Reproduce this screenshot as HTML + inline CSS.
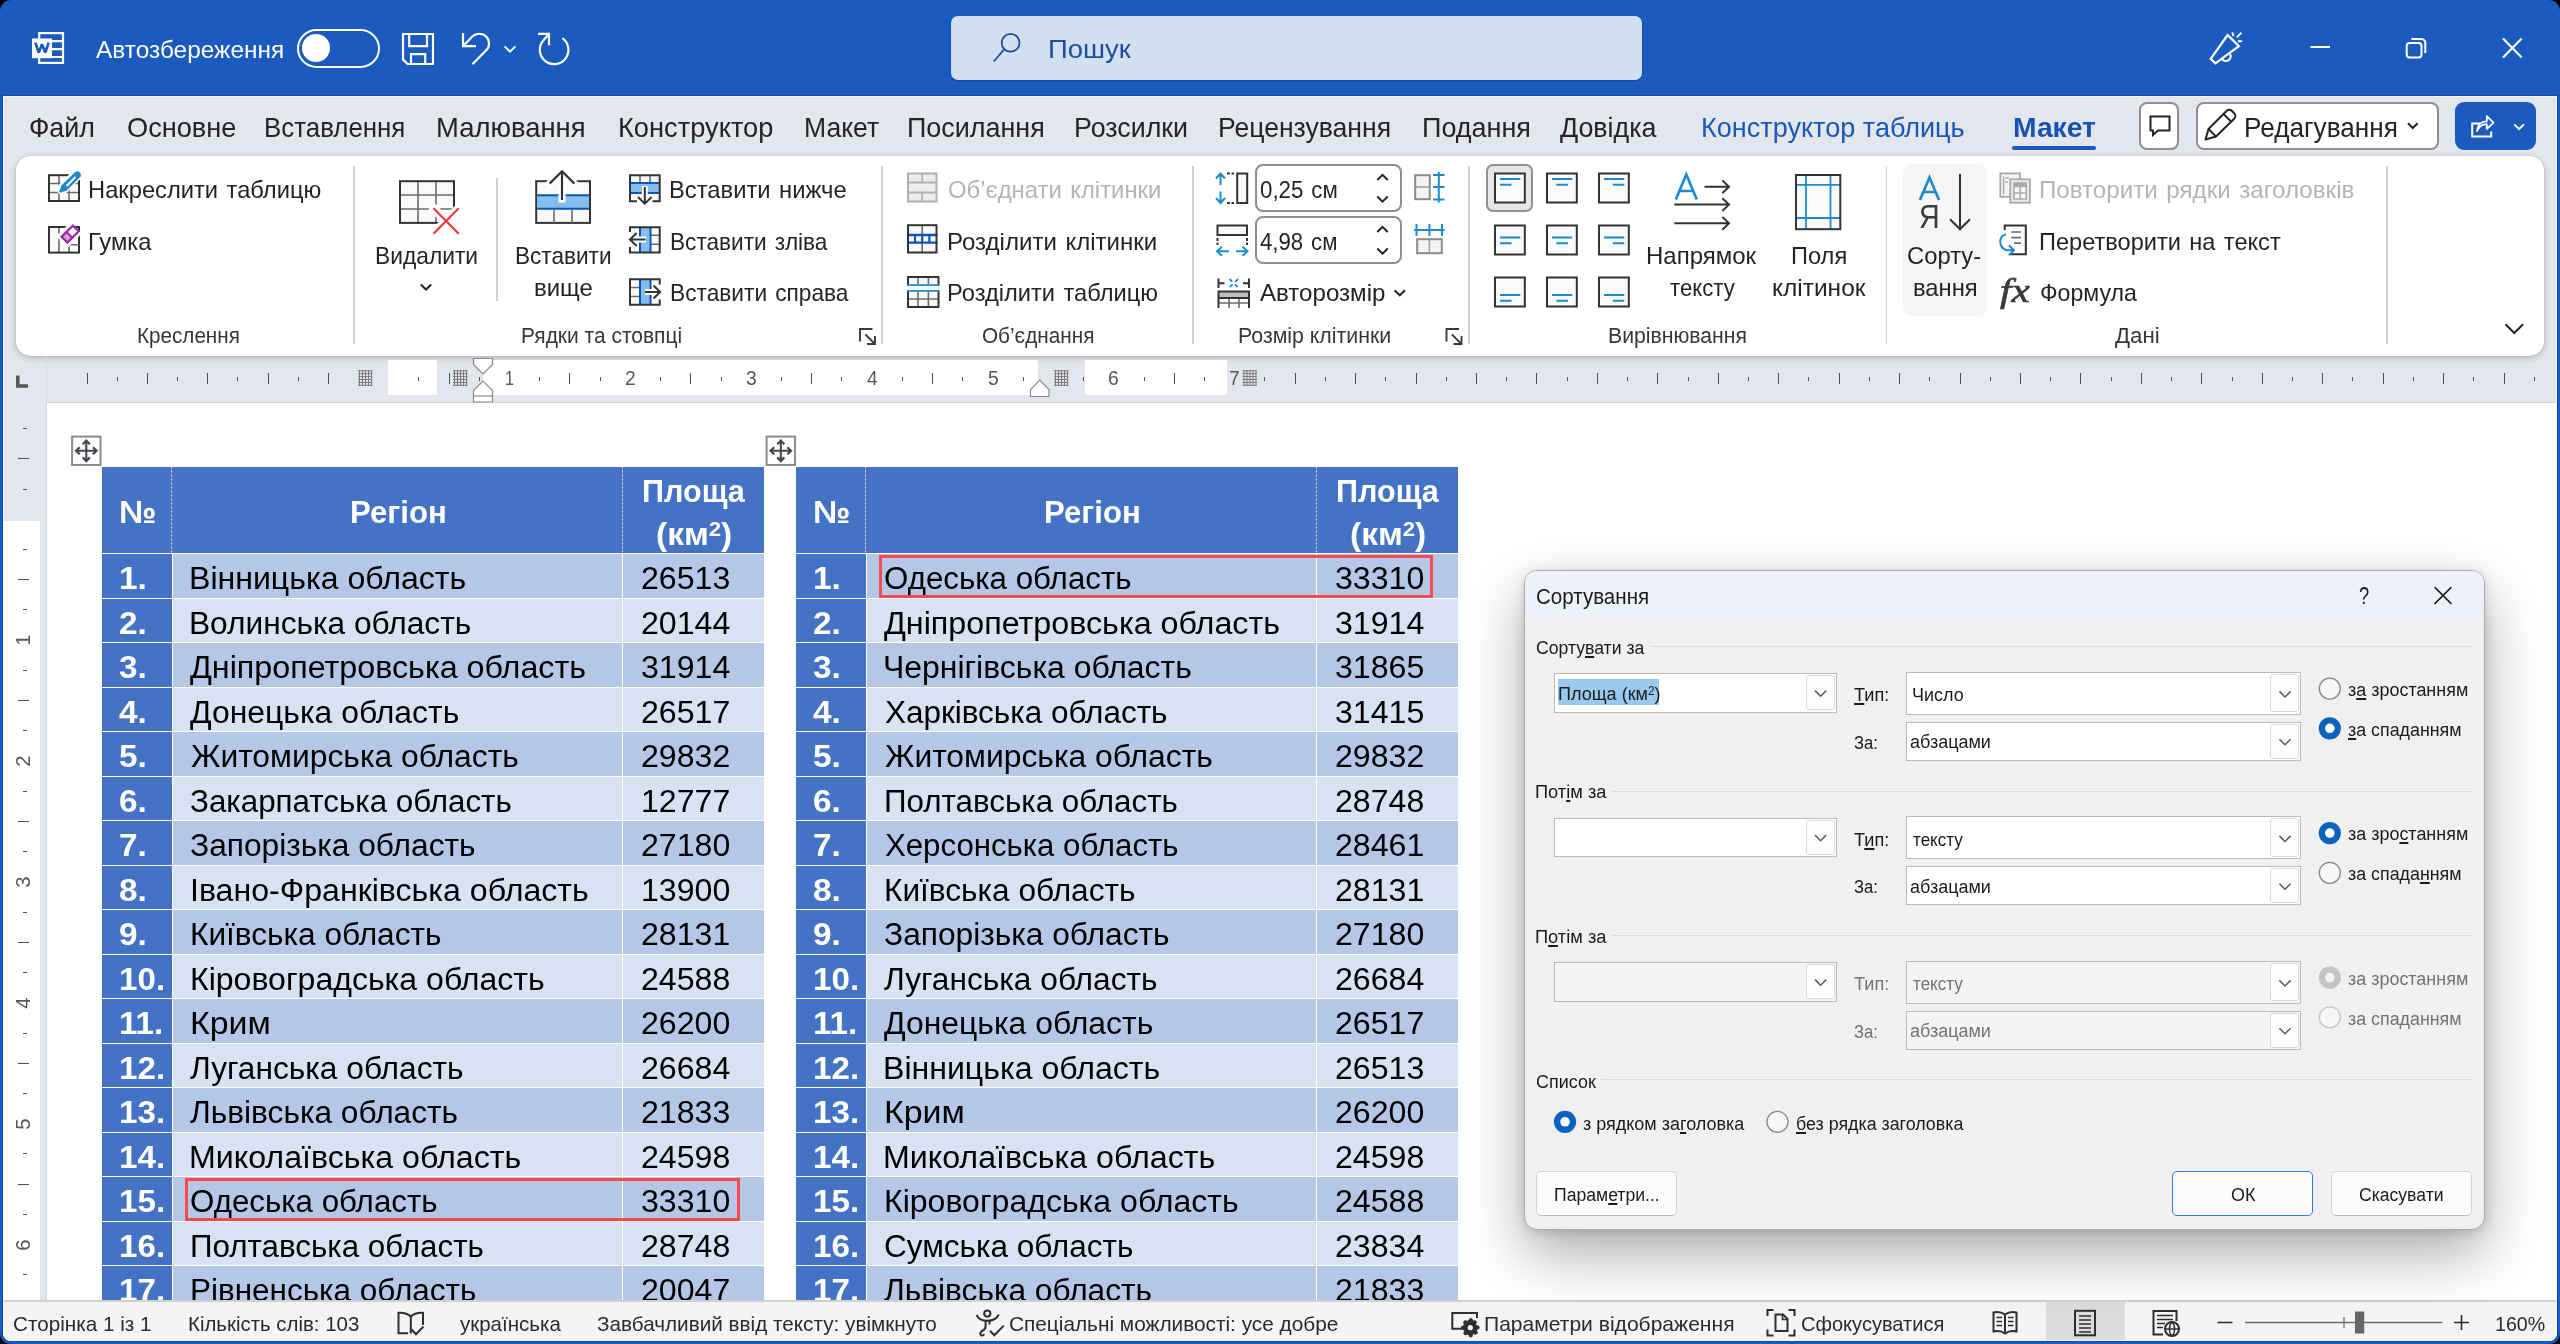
<!DOCTYPE html>
<html lang="uk"><head><meta charset="utf-8"><title>Word</title><style>
html,body{margin:0;padding:0;background:#000;}
body{width:2560px;height:1344px;position:relative;overflow:hidden;font-family:"Liberation Sans",sans-serif;}
.t{position:absolute;white-space:nowrap;transform-origin:0 0;}
u{text-decoration-thickness:1.5px;text-underline-offset:2px;}
#win{will-change:transform;position:absolute;left:0;top:0;width:2560px;height:1344px;background:#1B5ABF;border-radius:11px;overflow:hidden;}
</style></head><body>
<div id="win">
<div style="position:absolute;left:2px;top:95px;width:2555.5px;height:1247px;background:#0B4DBA;border-radius:0 0 9.5px 9.5px;"></div>
<div style="position:absolute;left:3px;top:96px;width:2553.5px;height:1244.8px;background:#E3E6EC;border-radius:0 0 8px 8px;"></div>
<!-- s1_title -->
<span class="t" style="left:96.45px;top:36.00px;font-size:24.5px;line-height:27px;color:#fff;transform:scaleX(0.9970);">Автозбереження</span>
<div style="position:absolute;left:296.5px;top:29px;width:83.5px;height:39px;box-sizing:border-box;border:2.5px solid #fff;border-radius:20px;"></div>
<div style="position:absolute;left:301.6px;top:33.5px;width:28.5px;height:28.5px;background:#fff;border-radius:50%;"></div>
<div style="position:absolute;left:951px;top:15.8px;width:690.5px;height:64.4px;background:#D2DFF1;border-radius:7px;box-shadow:0 1px 2px rgba(0,0,40,0.25);"></div>
<span class="t" style="left:1047.57px;top:34.70px;font-size:25.7px;line-height:28px;color:#1F4F9A;transform:scaleX(1.0697);">Пошук</span>
<svg style="position:absolute;left:0;top:0" width="2560" height="1344" viewBox="0 0 2560 1344" fill="none"><rect x="39.2" y="33.1" width="23.8" height="29.8" stroke="#fff" stroke-width="2.2" fill="none"/><path d="M51 41.2H63M51 49.2H63M51 57H63" stroke="#fff" stroke-width="2.2" fill="none"/><rect x="32" y="38.5" width="20" height="19.7" fill="#fff"/><path d="M35.4 42.6L38.7 52.6L42 44.2L45.3 52.6L48.6 42.6" stroke="#1B5ABF" stroke-width="2.7" fill="none" stroke-linejoin="bevel"/><path d="M403 34H433V64H407.5L403 59.5Z" stroke="#fff" stroke-width="2.2" fill="none"/><path d="M409.2 34V46.2H427V34M411 64V54.2H425.2V64" stroke="#fff" stroke-width="2.2" fill="none"/><path d="M463 33V46.2H476" stroke="#fff" stroke-width="2.2" fill="none"/><path d="M463.6 45.6L472.4 36.6A9.7 9.7 0 0 1 486.2 50.3L472.4 64.2" stroke="#fff" stroke-width="2.2" fill="none"/><path d="M504.6 46.4L510 51.6L515.4 46.4" stroke="#fff" stroke-width="2" fill="none"/><path d="M538 33.9H549V45.3" stroke="#fff" stroke-width="2.2" fill="none"/><path d="M548.4 34.6L543.5 40.3A14.3 14.3 0 1 0 562.4 38.2" stroke="#fff" stroke-width="2.2" fill="none"/><circle cx="1010.6" cy="42.8" r="8.9" stroke="#1F4F9A" stroke-width="1.8"/><path d="M1004.4 49.2L993.8 61.5" stroke="#1F4F9A" stroke-width="1.8"/><path d="M2310.5 47H2330" stroke="#fff" stroke-width="2"/><rect x="2406.7" y="43" width="14.8" height="14.5" rx="3" stroke="#fff" stroke-width="2"/><path d="M2411.5 39H2421.5A4 4 0 0 1 2425.3 43V53" stroke="#fff" stroke-width="2"/><path d="M2503 38.5L2521.7 57.5M2521.7 38.5L2503 57.5" stroke="#fff" stroke-width="2"/><path d="M2227.6 35L2238.9 46.2L2215.4 63.3L2210.7 58.8Z" stroke="#fff" stroke-width="2.2" fill="none" stroke-linejoin="miter"/><path d="M2221.8 58.6A4.6 4.6 0 0 0 2230 54" stroke="#fff" stroke-width="2.2" fill="none"/><path d="M2233.6 36.2L2232.2 32.4M2236.8 37.4L2241.4 32.6M2238 41.3H2242.2" stroke="#fff" stroke-width="2"/></svg>
<!-- s2_tabs -->
<span class="t" style="left:28.97px;top:112.20px;font-size:27.2px;line-height:31px;color:#242424;transform:scaleX(0.9849);">Файл</span>
<span class="t" style="left:127.22px;top:112.20px;font-size:27.2px;line-height:31px;color:#242424;transform:scaleX(0.9997);">Основне</span>
<span class="t" style="left:263.88px;top:112.20px;font-size:27.2px;line-height:31px;color:#242424;transform:scaleX(0.9515);">Вставлення</span>
<span class="t" style="left:435.75px;top:112.20px;font-size:27.2px;line-height:31px;color:#242424;transform:scaleX(1.0082);">Малювання</span>
<span class="t" style="left:618.46px;top:112.20px;font-size:27.2px;line-height:31px;color:#242424;transform:scaleX(1.0023);">Конструктор</span>
<span class="t" style="left:803.82px;top:112.20px;font-size:27.2px;line-height:31px;color:#242424;transform:scaleX(0.9760);">Макет</span>
<span class="t" style="left:906.82px;top:112.20px;font-size:27.2px;line-height:31px;color:#242424;transform:scaleX(0.9898);">Посилання</span>
<span class="t" style="left:1073.50px;top:112.20px;font-size:27.2px;line-height:31px;color:#242424;transform:scaleX(0.9865);">Розсилки</span>
<span class="t" style="left:1217.52px;top:112.20px;font-size:27.2px;line-height:31px;color:#242424;transform:scaleX(0.9763);">Рецензування</span>
<span class="t" style="left:1421.81px;top:112.20px;font-size:27.2px;line-height:31px;color:#242424;transform:scaleX(0.9926);">Подання</span>
<span class="t" style="left:1560.01px;top:112.20px;font-size:27.2px;line-height:31px;color:#242424;transform:scaleX(0.9859);">Довідка</span>
<span class="t" style="left:1701.28px;top:112.20px;font-size:27.2px;line-height:31px;color:#1957B8;transform:scaleX(0.9952);">Конструктор таблиць</span>
<span class="t" style="left:2012.83px;top:112.20px;font-size:27.2px;line-height:31px;color:#1651B4;transform:scaleX(1.0391);font-weight:700;">Макет</span>
<div style="position:absolute;left:2012px;top:145.8px;width:84px;height:4.2px;background:#185ABD;border-radius:2px;"></div>
<div style="position:absolute;left:2139.3px;top:101.5px;width:40.2px;height:48px;box-sizing:border-box;background:#fff;border:2px solid #8f8f8f;border-radius:8px;"></div>
<div style="position:absolute;left:2196px;top:101.5px;width:242.8px;height:48px;box-sizing:border-box;background:#fff;border:2px solid #8f8f8f;border-radius:8px;"></div>
<span class="t" style="left:2244.35px;top:112.20px;font-size:27.2px;line-height:31px;color:#242424;transform:scaleX(0.9619);">Редагування</span>
<div style="position:absolute;left:2455px;top:102px;width:80.8px;height:48px;background:#1B5ABF;border-radius:9px;"></div>
<svg style="position:absolute;left:0;top:0" width="2560" height="1344" viewBox="0 0 2560 1344" fill="none"><path d="M2150.5 116.5H2169.5V130.5H2158L2153 135V130.5H2150.5Z" stroke="#242424" stroke-width="2" fill="none" stroke-linejoin="miter"/><path d="M2205.5 139.5L2208.5 129L2226.5 111A3.9 3.9 0 0 1 2232 111L2234.2 113.2A3.9 3.9 0 0 1 2234.2 118.7L2216 136.5Z" stroke="#242424" stroke-width="2" fill="none" stroke-linejoin="round"/><path d="M2223.5 114L2231 121.5M2208.5 129L2216 136.5" stroke="#242424" stroke-width="2" fill="none"/><path d="M2408 123.2L2412.8 128L2417.6 123.2" stroke="#242424" stroke-width="2" fill="none"/><path d="M2480 123.5H2472.2V136.5H2491.2V131.5" stroke="#fff" stroke-width="2" fill="none"/><path d="M2477 131C2477.5 124.5 2481.5 121.3 2486.8 121.3V116.2L2493.5 122.6L2486.8 129V124.2C2482.5 124.2 2479.5 126 2477 131Z" stroke="#fff" stroke-width="1.8" fill="none" stroke-linejoin="round"/><path d="M2514.3 124.4L2519.1 129.2L2523.9 124.4" stroke="#fff" stroke-width="2" fill="none"/></svg>
<!-- s3_ribbon -->
<div style="position:absolute;left:16px;top:155.5px;width:2528px;height:200px;background:#fff;border-radius:15px;box-shadow:0 2px 7px rgba(0,0,0,0.22),0 0 2px rgba(0,0,0,0.10);"></div>
<div style="position:absolute;left:353.0px;top:166px;width:1.6px;height:178px;background:#d1d1d1;"></div>
<div style="position:absolute;left:496.2px;top:178px;width:1.6px;height:123px;background:#d1d1d1;"></div>
<div style="position:absolute;left:881.2px;top:166px;width:1.6px;height:178px;background:#d1d1d1;"></div>
<div style="position:absolute;left:1192.2px;top:166px;width:1.6px;height:178px;background:#d1d1d1;"></div>
<div style="position:absolute;left:1468.0px;top:166px;width:1.6px;height:178px;background:#d1d1d1;"></div>
<div style="position:absolute;left:1885.5px;top:166px;width:1.6px;height:178px;background:#d1d1d1;"></div>
<div style="position:absolute;left:2386.2px;top:166px;width:1.6px;height:178px;background:#d1d1d1;"></div>
<span class="t" style="left:88.35px;top:176.50px;font-size:23.2px;line-height:26px;color:#242424;transform:scaleX(1.0227);word-spacing:1.8px;">Накреслити таблицю</span>
<span class="t" style="left:88.35px;top:228.50px;font-size:23.2px;line-height:26px;color:#242424;transform:scaleX(1.0255);word-spacing:1.8px;">Гумка</span>
<span class="t" style="left:137.31px;top:324.20px;font-size:21.4px;line-height:24px;color:#363636;transform:scaleX(0.9655);">Креслення</span>
<span class="t" style="left:375.33px;top:243.00px;font-size:23.2px;line-height:26px;color:#242424;transform:scaleX(0.9827);word-spacing:1.8px;">Видалити</span>
<span class="t" style="left:514.85px;top:243.00px;font-size:23.2px;line-height:26px;color:#242424;transform:scaleX(0.9736);word-spacing:1.8px;">Вставити</span>
<span class="t" style="left:533.55px;top:274.60px;font-size:23.2px;line-height:26px;color:#242424;transform:scaleX(1.0335);word-spacing:1.8px;">вище</span>
<span class="t" style="left:668.55px;top:176.50px;font-size:23.2px;line-height:26px;color:#242424;transform:scaleX(1.0243);word-spacing:1.8px;">Вставити нижче</span>
<span class="t" style="left:669.84px;top:228.50px;font-size:23.2px;line-height:26px;color:#242424;transform:scaleX(0.9755);word-spacing:1.8px;">Вставити зліва</span>
<span class="t" style="left:669.84px;top:280.20px;font-size:23.2px;line-height:26px;color:#242424;transform:scaleX(0.9789);word-spacing:1.8px;">Вставити справа</span>
<span class="t" style="left:521.28px;top:324.20px;font-size:21.4px;line-height:24px;color:#363636;transform:scaleX(0.9799);">Рядки та стовпці</span>
<span class="t" style="left:947.58px;top:176.50px;font-size:23.2px;line-height:26px;color:#b4b4b4;transform:scaleX(1.0287);word-spacing:1.8px;">Об’єднати клітинки</span>
<span class="t" style="left:946.73px;top:228.50px;font-size:23.2px;line-height:26px;color:#242424;transform:scaleX(1.0369);word-spacing:1.8px;">Розділити клітинки</span>
<span class="t" style="left:946.76px;top:280.20px;font-size:23.2px;line-height:26px;color:#242424;transform:scaleX(1.0202);word-spacing:1.8px;">Розділити таблицю</span>
<span class="t" style="left:981.53px;top:324.20px;font-size:21.4px;line-height:24px;color:#363636;transform:scaleX(0.9689);">Об’єднання</span>
<div style="position:absolute;left:1254.5px;top:164px;width:147.3px;height:47.5px;box-sizing:border-box;background:#fff;border:2px solid #8f8f8f;border-radius:8px;"></div>
<div style="position:absolute;left:1254.5px;top:216px;width:147.3px;height:47.5px;box-sizing:border-box;background:#fff;border:2px solid #8f8f8f;border-radius:8px;"></div>
<span class="t" style="left:1259.83px;top:176.50px;font-size:23.2px;line-height:26px;color:#242424;transform:scaleX(0.9624);word-spacing:1.8px;">0,25 см</span>
<span class="t" style="left:1260.21px;top:228.50px;font-size:23.2px;line-height:26px;color:#242424;transform:scaleX(0.9575);word-spacing:1.8px;">4,98 см</span>
<span class="t" style="left:1259.95px;top:280.20px;font-size:23.2px;line-height:26px;color:#242424;transform:scaleX(1.0390);word-spacing:1.8px;">Авторозмір</span>
<span class="t" style="left:1238.25px;top:324.20px;font-size:21.4px;line-height:24px;color:#363636;transform:scaleX(0.9958);">Розмір клітинки</span>
<div style="position:absolute;left:1486px;top:164px;width:47px;height:47.5px;box-sizing:border-box;background:#e6e6e6;border:2px solid #8f8f8f;border-radius:7px;"></div>
<span class="t" style="left:1646.23px;top:243.00px;font-size:23.2px;line-height:26px;color:#242424;transform:scaleX(1.0339);word-spacing:1.8px;">Напрямок</span>
<span class="t" style="left:1669.62px;top:274.60px;font-size:23.2px;line-height:26px;color:#242424;transform:scaleX(0.9565);word-spacing:1.8px;">тексту</span>
<span class="t" style="left:1791.08px;top:243.00px;font-size:23.2px;line-height:26px;color:#242424;transform:scaleX(1.0195);word-spacing:1.8px;">Поля</span>
<span class="t" style="left:1771.56px;top:274.60px;font-size:23.2px;line-height:26px;color:#242424;transform:scaleX(1.0561);word-spacing:1.8px;">клітинок</span>
<span class="t" style="left:1608.26px;top:324.20px;font-size:21.4px;line-height:24px;color:#363636;transform:scaleX(0.9901);">Вирівнювання</span>
<div style="position:absolute;left:1903px;top:164px;width:84px;height:151.5px;background:#f5f5f5;border-radius:9px;"></div>
<span class="t" style="left:1907.01px;top:243.00px;font-size:23.2px;line-height:26px;color:#242424;transform:scaleX(1.0273);word-spacing:1.8px;">Сорту-</span>
<span class="t" style="left:1912.56px;top:274.60px;font-size:23.2px;line-height:26px;color:#242424;transform:scaleX(1.0255);word-spacing:1.8px;">вання</span>
<span class="t" style="left:2039.24px;top:176.50px;font-size:23.2px;line-height:26px;color:#b4b4b4;transform:scaleX(1.0413);word-spacing:1.8px;">Повторити рядки заголовків</span>
<span class="t" style="left:2039.29px;top:228.50px;font-size:23.2px;line-height:26px;color:#242424;transform:scaleX(1.0171);word-spacing:1.8px;">Перетворити на текст</span>
<span class="t" style="left:2039.88px;top:280.20px;font-size:23.2px;line-height:26px;color:#242424;transform:scaleX(0.9981);word-spacing:1.8px;">Формула</span>
<span class="t" style="left:2114.84px;top:324.20px;font-size:21.4px;line-height:24px;color:#363636;transform:scaleX(1.0390);">Дані</span>
<span class="t" style="left:1919.29px;top:198.00px;font-size:33px;line-height:37px;color:#3a3a3a;transform:scaleX(0.8658);">Я</span>
<span class="t" style="left:2000.05px;top:270.50px;font-size:34.5px;line-height:38px;color:#3a3a3a;transform:scaleX(1.1940);font-style:italic;font-family:'Liberation Serif',serif;-webkit-text-stroke:0.7px #3a3a3a;">fx</span>
<svg style="position:absolute;left:0;top:0" width="2560" height="1344" viewBox="0 0 2560 1344" fill="none"><rect x="49" y="175.2" width="30" height="25.80000000000001" fill="#fafafa"/><path d="M59 175.2V201M69 175.2V201M49 183.5H79M49 192.5H79" stroke="#6b6b6b" stroke-width="1.6"/><rect x="49" y="175.2" width="30" height="25.80000000000001" stroke="#333" stroke-width="2"/><path d="M80 171.5L58.5 193" stroke="#fff" stroke-width="11" stroke-linecap="butt"/><path d="M76.3 172.6A2.6 2.6 0 0 1 79.6 176L66 189.6L60.6 191.4L62.4 186Z" fill="#1E8BCD" stroke="#1E8BCD" stroke-width="2.4" stroke-linejoin="round"/><path d="M75.5 177L66.5 186" stroke="#fff" stroke-width="1.8"/><rect x="49" y="227" width="30" height="25.599999999999994" fill="#fafafa"/><path d="M59 227V252.6M69 227V252.6" stroke="#6b6b6b" stroke-width="1.6"/><rect x="49" y="227" width="30" height="25.599999999999994" stroke="#333" stroke-width="2"/><path d="M69 244.8H79" stroke="#6b6b6b" stroke-width="1.6"/><path d="M76 228L62 242" stroke="#fff" stroke-width="16"/><path d="M72.9 225.6L78.6 231.3L67.4 242.5L61.7 236.8Z" fill="#fff" stroke="#9C2BAB" stroke-width="2.2"/><path d="M66.6 232L72.2 237.7L67.4 242.5L61.7 236.8Z" fill="#D6A1DD" stroke="#9C2BAB" stroke-width="2.2"/><path d="M420.8 284.5L426 289.5L431.2 284.5" stroke="#242424" stroke-width="2" fill="none"/><path d="M860 341.5V329H872.5" stroke="#3a3a3a" stroke-width="1.9" fill="none"/><path d="M865.3 334.3L875 344M875 336V344H867" stroke="#3a3a3a" stroke-width="1.9" fill="none"/><rect x="400" y="181.2" width="54" height="41.70000000000002" fill="#fafafa"/><path d="M418 181.2V222.9M436 181.2V222.9M400 195H454M400 209H454" stroke="#6b6b6b" stroke-width="1.6"/><rect x="400" y="181.2" width="54" height="41.70000000000002" stroke="#333" stroke-width="2"/><path d="M431.5 206.3L460.7 235.7M460.7 206.3L431.5 235.7" stroke="#fff" stroke-width="9"/><path d="M446.1 221L460.5 206.6V235.4ZM446.1 221L431.7 235.4H460.5Z" fill="#fff"/><path d="M433.5 208.3L458.7 233.7M458.7 208.3L433.5 233.7" stroke="#F03A3E" stroke-width="2.2"/><rect x="536.2" y="181.2" width="53.799999999999955" height="41.70000000000002" fill="#fafafa" stroke="#333" stroke-width="2"/><path d="M554 210V223M572 210V223" stroke="#6b6b6b" stroke-width="1.6"/><rect x="537.2" y="195.2" width="51.8" height="13.6" fill="#83BEEC"/><path d="M537.2 195.2H589M537.2 208.8H589" stroke="#0F54B8" stroke-width="2"/><path d="M562 170V199M549 184L562 171L575 184" stroke="#fff" stroke-width="7" stroke-linecap="square"/><path d="M549 184L562 171L575 184Z" fill="#fdfdfd"/><path d="M562 171.5V200M549.6 183.6L562 171.2L574.4 183.6" stroke="#333" stroke-width="2.2"/><rect x="630" y="175.2" width="29.7" height="26" fill="#fafafa"/><path d="M640 175.2V183M650 175.2V183" stroke="#6b6b6b" stroke-width="1.6"/><rect x="630" y="183" width="29.7" height="10" fill="#83BEEC"/><path d="M630 183H659.7M630 193H659.7" stroke="#0F54B8" stroke-width="2"/><path d="M637 201.2H630V175.2H659.7V201.2H652.5" stroke="#333" stroke-width="2"/><path d="M644.8 186V203" stroke="#fff" stroke-width="6"/><path d="M644.8 187V203M638 197L644.8 203.6L651.6 197" stroke="#333" stroke-width="2"/><rect x="630" y="227.2" width="29.7" height="25.2" fill="#fafafa"/><path d="M651 235.3H659.7M651 244.3H659.7" stroke="#6b6b6b" stroke-width="1.6"/><rect x="640" y="227.2" width="10.5" height="25.2" fill="#83BEEC"/><path d="M640 227.2V252.4M650.5 227.2V252.4" stroke="#0F54B8" stroke-width="2"/><path d="M630 232V227.2H659.7V252.4H630V247" stroke="#333" stroke-width="2"/><path d="M630 239.5H646" stroke="#fff" stroke-width="6"/><path d="M630.5 239.5H645.5M636.6 233L630 239.5L636.6 246" stroke="#333" stroke-width="2"/><rect x="630" y="279.2" width="29.7" height="25.6" fill="#fafafa"/><path d="M630 287.5H640M630 296.5H640" stroke="#6b6b6b" stroke-width="1.6"/><rect x="640" y="279.2" width="10.5" height="25.6" fill="#83BEEC"/><path d="M640 279.2V304.8M650.5 279.2V304.8" stroke="#0F54B8" stroke-width="2"/><path d="M659.7 284.5V279.2H630V304.8H659.7V299.5" stroke="#333" stroke-width="2"/><path d="M645 292H660" stroke="#fff" stroke-width="6"/><path d="M645 292H660M653.6 285.5L660.2 292L653.6 298.5" stroke="#333" stroke-width="2"/><rect x="908" y="173.5" width="28.5" height="28" fill="#ededed" stroke="#b0b0b0" stroke-width="2"/><path d="M908 182.5H936.5M908 192.5H936.5M922.2 173.5V182.5M922.2 192.5V201.5" stroke="#b0b0b0" stroke-width="1.8"/><rect x="908" y="225.2" width="28.5" height="27.3" fill="#fafafa"/><path d="M922.2 225.2V234M922.2 243V252.5" stroke="#6b6b6b" stroke-width="1.6"/><path d="M907 235H937.5M907 242.6H937.5" stroke="#0F54B8" stroke-width="2.4"/><path d="M915 235V242.6M922.2 235V242.6M929.4 235V242.6" stroke="#0F54B8" stroke-width="2.2"/><rect x="908" y="225.2" width="28.5" height="27.3" stroke="#333" stroke-width="2"/><rect x="908" y="277" width="30.5" height="30" fill="#fafafa"/><path d="M918 277V284M928.4 277V284M918 291.5V307M928.4 291.5V307M908 299H938.5" stroke="#6b6b6b" stroke-width="1.6"/><path d="M908 285V277H938.5V285M908 291V307H938.5V291" stroke="#333" stroke-width="2"/><path d="M907 285.2H939.5M907 290.8H939.5" stroke="#1E8BCD" stroke-width="1.8"/><path d="M1377.3 180L1382.5 174.8L1387.7 180M1377.3 196.5L1382.5 201.7L1387.7 196.5M1377.3 232L1382.5 226.8L1387.7 232M1377.3 248.5L1382.5 253.7L1387.7 248.5" stroke="#242424" stroke-width="2" fill="none"/><path d="M1394.6 290.3L1399.8 295.3L1405.0 290.3" stroke="#242424" stroke-width="2" fill="none"/><path d="M1446.5 341.5V329H1459.0" stroke="#3a3a3a" stroke-width="1.9" fill="none"/><path d="M1451.8 334.3L1461.5 344M1461.5 336V344H1453.5" stroke="#3a3a3a" stroke-width="1.9" fill="none"/><rect x="1237.2" y="173.5" width="10" height="29.5" fill="#fafafa" stroke="#333" stroke-width="2"/><path d="M1227 173.5H1234M1227 203H1234" stroke="#333" stroke-width="2" stroke-dasharray="3 1.5"/><path d="M1220.5 174V185M1220.5 191.5V202.5M1216 178.5L1220.5 173.5L1225 178.5M1216 198L1220.5 203L1225 198" stroke="#1E8BCD" stroke-width="2" fill="none"/><rect x="1217.5" y="225.5" width="29.5" height="9.5" fill="#fafafa" stroke="#333" stroke-width="2"/><path d="M1217.5 238V245M1247 238V245" stroke="#333" stroke-width="2" stroke-dasharray="3 1.5"/><path d="M1217 251.3H1229M1236 251.3H1247.5M1222 246.8L1217 251.3L1222 255.8M1242.5 246.8L1247.5 251.3L1242.5 255.8" stroke="#1E8BCD" stroke-width="2" fill="none"/><rect x="1415.2" y="175.2" width="14.6" height="24" fill="#f4f4f4" stroke="#8a8a8a" stroke-width="2"/><path d="M1415.2 187H1429.8" stroke="#a0a0a0" stroke-width="1.6"/><path d="M1438.8 172V202.5M1433 175H1444.5M1433 187H1444.5M1433 199.4H1444.5" stroke="#1E8BCD" stroke-width="2"/><rect x="1417.2" y="239.2" width="24.6" height="14" fill="#f4f4f4" stroke="#8a8a8a" stroke-width="2"/><path d="M1429.4 239.2V253.2" stroke="#a0a0a0" stroke-width="1.6"/><path d="M1414 230H1444.5M1416.5 224V236M1429.4 224V236M1442 224V236" stroke="#1E8BCD" stroke-width="2"/><path d="M1218.5 278.5V288M1218.5 283.2H1224.5M1249 278.5V288M1249 283.2H1243" stroke="#333" stroke-width="2"/><path d="M1229.5 279L1238 287.5M1238 279L1229.5 287.5" stroke="#1E8BCD" stroke-width="1.8" stroke-dasharray="4 3.6"/><rect x="1218.5" y="291.5" width="30.5" height="6.5" fill="#bdbdbd"/><path d="M1229 298V308M1239 298V308M1218.5 303H1249" stroke="#6b6b6b" stroke-width="1.6"/><path d="M1218.5 308V291.5H1249V308M1218.5 298H1249" stroke="#333" stroke-width="2" fill="none"/><rect x="1495" y="173.5" width="29.8" height="29" fill="#fafafa" stroke="#333" stroke-width="2"/><path d="M1500 179.0H1520.3M1500 184.8H1511.5" stroke="#1E8BCD" stroke-width="2"/><rect x="1547" y="173.5" width="29.8" height="29" fill="#fafafa" stroke="#333" stroke-width="2"/><path d="M1552 179.0H1572.3M1556.4 184.8H1567.9" stroke="#1E8BCD" stroke-width="2"/><rect x="1599" y="173.5" width="29.8" height="29" fill="#fafafa" stroke="#333" stroke-width="2"/><path d="M1604 179.0H1624.3M1612.8 184.8H1624.3" stroke="#1E8BCD" stroke-width="2"/><rect x="1495" y="225.5" width="29.8" height="29" fill="#fafafa" stroke="#333" stroke-width="2"/><path d="M1500 237.5H1520.3M1500 243.3H1511.5" stroke="#1E8BCD" stroke-width="2"/><rect x="1547" y="225.5" width="29.8" height="29" fill="#fafafa" stroke="#333" stroke-width="2"/><path d="M1552 237.5H1572.3M1556.4 243.3H1567.9" stroke="#1E8BCD" stroke-width="2"/><rect x="1599" y="225.5" width="29.8" height="29" fill="#fafafa" stroke="#333" stroke-width="2"/><path d="M1604 237.5H1624.3M1612.8 243.3H1624.3" stroke="#1E8BCD" stroke-width="2"/><rect x="1495" y="277.5" width="29.8" height="29" fill="#fafafa" stroke="#333" stroke-width="2"/><path d="M1500 295.0H1520.3M1500 300.8H1511.5" stroke="#1E8BCD" stroke-width="2"/><rect x="1547" y="277.5" width="29.8" height="29" fill="#fafafa" stroke="#333" stroke-width="2"/><path d="M1552 295.0H1572.3M1556.4 300.8H1567.9" stroke="#1E8BCD" stroke-width="2"/><rect x="1599" y="277.5" width="29.8" height="29" fill="#fafafa" stroke="#333" stroke-width="2"/><path d="M1604 295.0H1624.3M1612.8 300.8H1624.3" stroke="#1E8BCD" stroke-width="2"/><path d="M1675.8 199.5L1686.3 174.5L1696.8 199.5M1679.6 191H1693" stroke="#1E8BCD" stroke-width="2.7" fill="none"/><path d="M1704.5 186.8H1729M1722.3 180.4L1729 186.8L1722.3 193.20000000000002" stroke="#333" stroke-width="2" fill="none"/><path d="M1674.3 204.6H1729M1722.3 198.2L1729 204.6L1722.3 211.0" stroke="#333" stroke-width="2" fill="none"/><path d="M1674.3 223.3H1729M1722.3 216.9L1729 223.3L1722.3 229.70000000000002" stroke="#333" stroke-width="2" fill="none"/><rect x="1796" y="175" width="44.3" height="54.2" fill="#fafafa"/><path d="M1806 175V229.2M1830.5 175V229.2M1796 184.8H1840.3M1796 218H1840.3" stroke="#1E8BCD" stroke-width="1.8"/><rect x="1796" y="175" width="44.3" height="54.2" stroke="#333" stroke-width="2"/><path d="M1920 200L1929.5 177.5L1939 200M1923.3 192H1935.7" stroke="#1E8BCD" stroke-width="2.7" fill="none"/><path d="M1960 174V229M1950 219.3L1960 229.3L1970 219.3" stroke="#333" stroke-width="2" fill="none"/><rect x="2000.3" y="173.4" width="19.6" height="23.4" fill="#f3f3f3" stroke="#a9a9a9" stroke-width="1.8"/><path d="M2003.6 176.5V194" stroke="#a9a9a9" stroke-width="1.4"/><path d="M2005.5 178H2009M2005.5 182H2008" stroke="#a9a9a9" stroke-width="1.4"/><rect x="2010.3" y="179.3" width="19.6" height="23.4" fill="#e9e9e9" stroke="#a9a9a9" stroke-width="1.8"/><rect x="2014" y="183" width="12.3" height="16" fill="#f6f6f6" stroke="#a9a9a9" stroke-width="1.5"/><rect x="2014" y="183" width="12.3" height="4.2" fill="#a9a9a9"/><path d="M2014 193H2026.3M2020.2 187V199" stroke="#a9a9a9" stroke-width="1.5"/><path d="M2004.8 230V225.5H2025.8V254.3H2010.5" stroke="#333" stroke-width="2" fill="none"/><path d="M2011.3 232H2021M2011.3 237.6H2021M2014 243.2H2021" stroke="#6b6b6b" stroke-width="1.7"/><path d="M2006 234.2C1998.5 236 1998 247.5 2006.5 250.2H2013.5M2008.8 245.2L2014 250.2L2008.8 255.2" stroke="#1E8BCD" stroke-width="2" fill="none"/><path d="M2505.5 324.3L2514.3 333L2523.1 324.3" stroke="#242424" stroke-width="2" fill="none"/></svg>
<!-- s4_ruler -->
<div style="position:absolute;left:388px;top:360px;width:49px;height:35px;background:#fff;"></div>
<div style="position:absolute;left:483px;top:360px;width:555px;height:35px;background:#fff;"></div>
<div style="position:absolute;left:1085px;top:360px;width:142px;height:35px;background:#fff;"></div>
<div style="position:absolute;left:46px;top:401.5px;width:2510.5px;height:1.5px;background:#d2d4d8;"></div>
<div style="position:absolute;left:46.5px;top:403px;width:2510px;height:897px;background:#fff;"></div>
<div style="position:absolute;left:45.5px;top:356px;width:1.2px;height:944px;background:#d6d8dc;"></div>
<div style="position:absolute;left:3px;top:521px;width:37px;height:779px;background:#fff;"></div>
<span class="t" style="left:504.74px;top:367.00px;font-size:20.3px;line-height:22px;color:#575757;transform:scaleX(0.8000);">1</span>
<span class="t" style="left:625.00px;top:367.00px;font-size:20.3px;line-height:22px;color:#575757;transform:scaleX(0.9500);">2</span>
<span class="t" style="left:745.93px;top:367.00px;font-size:20.3px;line-height:22px;color:#575757;transform:scaleX(0.9500);">3</span>
<span class="t" style="left:866.83px;top:367.00px;font-size:20.3px;line-height:22px;color:#575757;transform:scaleX(0.9500);">4</span>
<span class="t" style="left:987.65px;top:367.00px;font-size:20.3px;line-height:22px;color:#575757;transform:scaleX(0.9500);">5</span>
<span class="t" style="left:1108.45px;top:367.00px;font-size:20.3px;line-height:22px;color:#575757;transform:scaleX(0.9500);">6</span>
<span class="t" style="left:1229.39px;top:367.00px;font-size:20.3px;line-height:22px;color:#575757;transform:scaleX(0.9500);">7</span>
<span class="t" style="left:12.2px;top:646.2px;font-size:20.3px;line-height:22px;color:#575757;transform:rotate(-90deg);transform-origin:0 0;width:12px;text-align:center;">1</span>
<span class="t" style="left:12.2px;top:767.1px;font-size:20.3px;line-height:22px;color:#575757;transform:rotate(-90deg);transform-origin:0 0;width:12px;text-align:center;">2</span>
<span class="t" style="left:12.2px;top:887.9px;font-size:20.3px;line-height:22px;color:#575757;transform:rotate(-90deg);transform-origin:0 0;width:12px;text-align:center;">3</span>
<span class="t" style="left:12.2px;top:1008.8px;font-size:20.3px;line-height:22px;color:#575757;transform:rotate(-90deg);transform-origin:0 0;width:12px;text-align:center;">4</span>
<span class="t" style="left:12.2px;top:1129.7px;font-size:20.3px;line-height:22px;color:#575757;transform:rotate(-90deg);transform-origin:0 0;width:12px;text-align:center;">5</span>
<span class="t" style="left:12.2px;top:1250.6px;font-size:20.3px;line-height:22px;color:#575757;transform:rotate(-90deg);transform-origin:0 0;width:12px;text-align:center;">6</span>
<svg style="position:absolute;left:0;top:0" width="2560" height="1344" viewBox="0 0 2560 1344" fill="none"><path d="M17.8 375.5V386H28" stroke="#555" stroke-width="3.6" fill="none"/><path d="M87.5 373V384M117.5 377V381M147.5 373V384M177.5 377V381M207.5 373V384M237.5 377V381M268.5 373V384M298.5 377V381M328.5 373V384M418.5 377V381M449.5 373V384M479.5 377V381M539.5 377V381M569.5 373V384M600.5 377V381M660.5 377V381M690.5 373V384M721.5 377V381M781.5 377V381M811.5 373V384M841.5 377V381M902.5 377V381M932.5 373V384M962.5 377V381M1023.5 377V381M1083.5 377V381M1144.5 377V381M1174.5 373V384M1204.5 377V381M1264.5 377V381M1295.5 373V384M1325.5 377V381M1355.5 373V384M1385.5 377V381M1416.5 373V384M1446.5 377V381M1476.5 373V384M1506.5 377V381M1536.5 373V384M1567.5 377V381M1597.5 373V384M1627.5 377V381M1657.5 373V384M1688.5 377V381M1718.5 373V384M1748.5 377V381M1778.5 373V384M1808.5 377V381M1839.5 373V384M1869.5 377V381M1899.5 373V384M1929.5 377V381M1960.5 373V384M1990.5 377V381M2020.5 373V384M2050.5 377V381M2080.5 373V384M2111.5 377V381M2141.5 373V384M2171.5 377V381M2201.5 373V384M2232.5 377V381M2262.5 373V384M2292.5 377V381M2322.5 373V384M2352.5 377V381M2383.5 373V384M2413.5 377V381M2443.5 373V384M2473.5 377V381M2504.5 373V384M2534.5 377V381" stroke="#505050" stroke-width="1" shape-rendering="crispEdges"/><path d="M359.5 370V386M362.5 370V386M365.5 370V386M368.5 370V386M371.5 370V386M358 370.8H372.5M358 373.7H372.5M358 376.6H372.5M358 379.5H372.5M358 382.40000000000003H372.5M358 385.3H372.5" stroke="#7a7a7a" stroke-width="1"/><path d="M454.5 370V386M457.5 370V386M460.5 370V386M463.5 370V386M466.5 370V386M453 370.8H467.5M453 373.7H467.5M453 376.6H467.5M453 379.5H467.5M453 382.40000000000003H467.5M453 385.3H467.5" stroke="#7a7a7a" stroke-width="1"/><path d="M1055.5 370V386M1058.5 370V386M1061.5 370V386M1064.5 370V386M1067.5 370V386M1054 370.8H1068.5M1054 373.7H1068.5M1054 376.6H1068.5M1054 379.5H1068.5M1054 382.40000000000003H1068.5M1054 385.3H1068.5" stroke="#7a7a7a" stroke-width="1"/><path d="M1244.0 370V386M1247.0 370V386M1250.0 370V386M1253.0 370V386M1256.0 370V386M1242.5 370.8H1257.0M1242.5 373.7H1257.0M1242.5 376.6H1257.0M1242.5 379.5H1257.0M1242.5 382.40000000000003H1257.0M1242.5 385.3H1257.0" stroke="#7a7a7a" stroke-width="1"/><path d="M473.5 358.5H492.5V364.5L483 374L473.5 364.5Z" fill="#fff" stroke="#8a8a8a" stroke-width="1.2"/><path d="M473.5 402V390.5L483 381L492.5 390.5V402Z" fill="#fff" stroke="#8a8a8a" stroke-width="1.2"/><path d="M473.5 396H492.5" stroke="#8a8a8a" stroke-width="1.2"/><path d="M1030.5 396.5V389.5L1039.8 380.2L1049 389.5V396.5Z" fill="#fff" stroke="#8a8a8a" stroke-width="1.2"/><path d="M23 428.5H27M18 458.5H29M23 489.5H27M23 549.5H27M18 579.5H29M23 609.5H27M23 670.5H27M18 700.5H29M23 730.5H27M23 791.5H27M18 821.5H29M23 851.5H27M23 912.5H27M18 942.5H29M23 972.5H27M23 1033.5H27M18 1063.5H29M23 1093.5H27M23 1153.5H27M18 1184.5H29M23 1214.5H27M23 1274.5H27" stroke="#505050" stroke-width="1" shape-rendering="crispEdges"/></svg>
<!-- s5_doc -->
<div style="position:absolute;left:46.5px;top:403px;width:2510px;height:897px;overflow:hidden;">
<div style="position:absolute;left:55.5px;top:64px;width:662px;height:86px;background:#4472C4;"></div>
<div style="position:absolute;left:124.1px;top:64px;width:1.2px;height:86px;background:repeating-linear-gradient(to bottom,#eef1f8 0 1.4px,#8d93a0 1.4px 4px);"></div>
<div style="position:absolute;left:575.0px;top:64px;width:1.2px;height:86px;background:repeating-linear-gradient(to bottom,#eef1f8 0 1.4px,#8d93a0 1.4px 4px);"></div>
<span class="t" style="left:72.08px;top:90.60px;font-size:32px;line-height:36px;color:#fff;transform:scaleX(1.0500);font-weight:700;">№</span>
<span class="t" style="left:303.45px;top:90.60px;font-size:32px;line-height:36px;color:#fff;transform:scaleX(0.9726);font-weight:700;">Регіон</span>
<span class="t" style="left:595.78px;top:70.30px;font-size:32px;line-height:36px;color:#fff;transform:scaleX(0.9550);font-weight:700;">Площа</span>
<span class="t" style="left:609.86px;top:112.60px;font-size:32px;line-height:36px;color:#fff;transform:scaleX(1.0480);font-weight:700;">(км<span style="font-size:66%;position:relative;top:-0.40em">2</span>)</span>
<div style="position:absolute;left:55.5px;top:151.25px;width:69.6px;height:43.6px;background:#4472C4;"></div>
<div style="position:absolute;left:126.1px;top:151.25px;width:449.3px;height:43.6px;background:#B4C7E7;"></div>
<div style="position:absolute;left:576.6px;top:151.25px;width:140.9px;height:43.6px;background:#B4C7E7;"></div>
<span class="t" style="left:72.57px;top:157.00px;font-size:32px;line-height:36px;color:#fff;transform:scaleX(1.0431);font-weight:700;">1.</span>
<span class="t" style="left:142.82px;top:158.00px;font-size:31px;line-height:35px;color:#000;transform:scaleX(1.0347);">Вінницька область</span>
<span class="t" style="left:594.40px;top:157.00px;font-size:32px;line-height:36px;color:#000;transform:scaleX(1.0027);">26513</span>
<div style="position:absolute;left:55.5px;top:195.75px;width:69.6px;height:43.6px;background:#4472C4;"></div>
<div style="position:absolute;left:126.1px;top:195.75px;width:449.3px;height:43.6px;background:#D9E2F3;"></div>
<div style="position:absolute;left:576.6px;top:195.75px;width:140.9px;height:43.6px;background:#D9E2F3;"></div>
<span class="t" style="left:72.57px;top:201.50px;font-size:32px;line-height:36px;color:#fff;transform:scaleX(1.0431);font-weight:700;">2.</span>
<span class="t" style="left:142.85px;top:202.50px;font-size:31px;line-height:35px;color:#000;transform:scaleX(1.0211);">Волинська область</span>
<span class="t" style="left:594.40px;top:201.50px;font-size:32px;line-height:36px;color:#000;transform:scaleX(1.0027);">20144</span>
<div style="position:absolute;left:55.5px;top:240.25px;width:69.6px;height:43.6px;background:#4472C4;"></div>
<div style="position:absolute;left:126.1px;top:240.25px;width:449.3px;height:43.6px;background:#B4C7E7;"></div>
<div style="position:absolute;left:576.6px;top:240.25px;width:140.9px;height:43.6px;background:#B4C7E7;"></div>
<span class="t" style="left:72.57px;top:246.00px;font-size:32px;line-height:36px;color:#fff;transform:scaleX(1.0431);font-weight:700;">3.</span>
<span class="t" style="left:143.97px;top:247.00px;font-size:31px;line-height:35px;color:#000;transform:scaleX(1.0406);">Дніпропетровська область</span>
<span class="t" style="left:594.40px;top:246.00px;font-size:32px;line-height:36px;color:#000;transform:scaleX(1.0027);">31914</span>
<div style="position:absolute;left:55.5px;top:284.75px;width:69.6px;height:43.6px;background:#4472C4;"></div>
<div style="position:absolute;left:126.1px;top:284.75px;width:449.3px;height:43.6px;background:#D9E2F3;"></div>
<div style="position:absolute;left:576.6px;top:284.75px;width:140.9px;height:43.6px;background:#D9E2F3;"></div>
<span class="t" style="left:72.57px;top:290.50px;font-size:32px;line-height:36px;color:#fff;transform:scaleX(1.0431);font-weight:700;">4.</span>
<span class="t" style="left:143.98px;top:291.50px;font-size:31px;line-height:35px;color:#000;transform:scaleX(1.0288);">Донецька область</span>
<span class="t" style="left:594.40px;top:290.50px;font-size:32px;line-height:36px;color:#000;transform:scaleX(1.0027);">26517</span>
<div style="position:absolute;left:55.5px;top:329.25px;width:69.6px;height:43.6px;background:#4472C4;"></div>
<div style="position:absolute;left:126.1px;top:329.25px;width:449.3px;height:43.6px;background:#B4C7E7;"></div>
<div style="position:absolute;left:576.6px;top:329.25px;width:140.9px;height:43.6px;background:#B4C7E7;"></div>
<span class="t" style="left:72.57px;top:335.00px;font-size:32px;line-height:36px;color:#fff;transform:scaleX(1.0431);font-weight:700;">5.</span>
<span class="t" style="left:144.29px;top:336.00px;font-size:31px;line-height:35px;color:#000;transform:scaleX(1.0263);">Житомирська область</span>
<span class="t" style="left:594.40px;top:335.00px;font-size:32px;line-height:36px;color:#000;transform:scaleX(1.0027);">29832</span>
<div style="position:absolute;left:55.5px;top:373.75px;width:69.6px;height:43.6px;background:#4472C4;"></div>
<div style="position:absolute;left:126.1px;top:373.75px;width:449.3px;height:43.6px;background:#D9E2F3;"></div>
<div style="position:absolute;left:576.6px;top:373.75px;width:140.9px;height:43.6px;background:#D9E2F3;"></div>
<span class="t" style="left:72.57px;top:379.50px;font-size:32px;line-height:36px;color:#fff;transform:scaleX(1.0431);font-weight:700;">6.</span>
<span class="t" style="left:143.70px;top:380.50px;font-size:31px;line-height:35px;color:#000;transform:scaleX(1.0105);">Закарпатська область</span>
<span class="t" style="left:594.40px;top:379.50px;font-size:32px;line-height:36px;color:#000;transform:scaleX(1.0027);">12777</span>
<div style="position:absolute;left:55.5px;top:418.25px;width:69.6px;height:43.6px;background:#4472C4;"></div>
<div style="position:absolute;left:126.1px;top:418.25px;width:449.3px;height:43.6px;background:#B4C7E7;"></div>
<div style="position:absolute;left:576.6px;top:418.25px;width:140.9px;height:43.6px;background:#B4C7E7;"></div>
<span class="t" style="left:72.57px;top:424.00px;font-size:32px;line-height:36px;color:#fff;transform:scaleX(1.0431);font-weight:700;">7.</span>
<span class="t" style="left:143.69px;top:425.00px;font-size:31px;line-height:35px;color:#000;transform:scaleX(1.0222);">Запорізька область</span>
<span class="t" style="left:594.40px;top:424.00px;font-size:32px;line-height:36px;color:#000;transform:scaleX(1.0027);">27180</span>
<div style="position:absolute;left:55.5px;top:462.75px;width:69.6px;height:43.6px;background:#4472C4;"></div>
<div style="position:absolute;left:126.1px;top:462.75px;width:449.3px;height:43.6px;background:#D9E2F3;"></div>
<div style="position:absolute;left:576.6px;top:462.75px;width:140.9px;height:43.6px;background:#D9E2F3;"></div>
<span class="t" style="left:72.57px;top:468.50px;font-size:32px;line-height:36px;color:#fff;transform:scaleX(1.0431);font-weight:700;">8.</span>
<span class="t" style="left:143.75px;top:469.50px;font-size:31px;line-height:35px;color:#000;transform:scaleX(1.0360);">Івано-Франківська область</span>
<span class="t" style="left:594.40px;top:468.50px;font-size:32px;line-height:36px;color:#000;transform:scaleX(1.0027);">13900</span>
<div style="position:absolute;left:55.5px;top:507.25px;width:69.6px;height:43.6px;background:#4472C4;"></div>
<div style="position:absolute;left:126.1px;top:507.25px;width:449.3px;height:43.6px;background:#B4C7E7;"></div>
<div style="position:absolute;left:576.6px;top:507.25px;width:140.9px;height:43.6px;background:#B4C7E7;"></div>
<span class="t" style="left:72.57px;top:513.00px;font-size:32px;line-height:36px;color:#fff;transform:scaleX(1.0431);font-weight:700;">9.</span>
<span class="t" style="left:143.61px;top:514.00px;font-size:31px;line-height:35px;color:#000;transform:scaleX(1.0193);">Київська область</span>
<span class="t" style="left:594.40px;top:513.00px;font-size:32px;line-height:36px;color:#000;transform:scaleX(1.0027);">28131</span>
<div style="position:absolute;left:55.5px;top:551.75px;width:69.6px;height:43.6px;background:#4472C4;"></div>
<div style="position:absolute;left:126.1px;top:551.75px;width:449.3px;height:43.6px;background:#D9E2F3;"></div>
<div style="position:absolute;left:576.6px;top:551.75px;width:140.9px;height:43.6px;background:#D9E2F3;"></div>
<span class="t" style="left:72.19px;top:557.50px;font-size:32px;line-height:36px;color:#fff;transform:scaleX(1.0363);font-weight:700;">10.</span>
<span class="t" style="left:143.57px;top:558.50px;font-size:31px;line-height:35px;color:#000;transform:scaleX(1.0335);">Кіровоградська область</span>
<span class="t" style="left:594.40px;top:557.50px;font-size:32px;line-height:36px;color:#000;transform:scaleX(1.0027);">24588</span>
<div style="position:absolute;left:55.5px;top:596.25px;width:69.6px;height:43.6px;background:#4472C4;"></div>
<div style="position:absolute;left:126.1px;top:596.25px;width:449.3px;height:43.6px;background:#B4C7E7;"></div>
<div style="position:absolute;left:576.6px;top:596.25px;width:140.9px;height:43.6px;background:#B4C7E7;"></div>
<span class="t" style="left:72.19px;top:602.00px;font-size:32px;line-height:36px;color:#fff;transform:scaleX(1.0363);font-weight:700;">11.</span>
<span class="t" style="left:143.42px;top:603.00px;font-size:31px;line-height:35px;color:#000;transform:scaleX(1.0938);">Крим</span>
<span class="t" style="left:594.40px;top:602.00px;font-size:32px;line-height:36px;color:#000;transform:scaleX(1.0027);">26200</span>
<div style="position:absolute;left:55.5px;top:640.75px;width:69.6px;height:43.6px;background:#4472C4;"></div>
<div style="position:absolute;left:126.1px;top:640.75px;width:449.3px;height:43.6px;background:#D9E2F3;"></div>
<div style="position:absolute;left:576.6px;top:640.75px;width:140.9px;height:43.6px;background:#D9E2F3;"></div>
<span class="t" style="left:72.19px;top:646.50px;font-size:32px;line-height:36px;color:#fff;transform:scaleX(1.0363);font-weight:700;">12.</span>
<span class="t" style="left:143.95px;top:647.50px;font-size:31px;line-height:35px;color:#000;transform:scaleX(1.0218);">Луганська область</span>
<span class="t" style="left:594.40px;top:646.50px;font-size:32px;line-height:36px;color:#000;transform:scaleX(1.0027);">26684</span>
<div style="position:absolute;left:55.5px;top:685.25px;width:69.6px;height:43.6px;background:#4472C4;"></div>
<div style="position:absolute;left:126.1px;top:685.25px;width:449.3px;height:43.6px;background:#B4C7E7;"></div>
<div style="position:absolute;left:576.6px;top:685.25px;width:140.9px;height:43.6px;background:#B4C7E7;"></div>
<span class="t" style="left:72.19px;top:691.00px;font-size:32px;line-height:36px;color:#fff;transform:scaleX(1.0363);font-weight:700;">13.</span>
<span class="t" style="left:143.95px;top:692.00px;font-size:31px;line-height:35px;color:#000;transform:scaleX(1.0211);">Львівська область</span>
<span class="t" style="left:594.40px;top:691.00px;font-size:32px;line-height:36px;color:#000;transform:scaleX(1.0027);">21833</span>
<div style="position:absolute;left:55.5px;top:729.75px;width:69.6px;height:43.6px;background:#4472C4;"></div>
<div style="position:absolute;left:126.1px;top:729.75px;width:449.3px;height:43.6px;background:#D9E2F3;"></div>
<div style="position:absolute;left:576.6px;top:729.75px;width:140.9px;height:43.6px;background:#D9E2F3;"></div>
<span class="t" style="left:72.19px;top:735.50px;font-size:32px;line-height:36px;color:#fff;transform:scaleX(1.0363);font-weight:700;">14.</span>
<span class="t" style="left:142.81px;top:736.50px;font-size:31px;line-height:35px;color:#000;transform:scaleX(1.0375);">Миколаївська область</span>
<span class="t" style="left:594.40px;top:735.50px;font-size:32px;line-height:36px;color:#000;transform:scaleX(1.0027);">24598</span>
<div style="position:absolute;left:55.5px;top:774.25px;width:69.6px;height:43.6px;background:#4472C4;"></div>
<div style="position:absolute;left:126.1px;top:774.25px;width:449.3px;height:43.6px;background:#B4C7E7;"></div>
<div style="position:absolute;left:576.6px;top:774.25px;width:140.9px;height:43.6px;background:#B4C7E7;"></div>
<span class="t" style="left:72.19px;top:780.00px;font-size:32px;line-height:36px;color:#fff;transform:scaleX(1.0363);font-weight:700;">15.</span>
<span class="t" style="left:143.98px;top:781.00px;font-size:31px;line-height:35px;color:#000;transform:scaleX(1.0092);">Одеська область</span>
<span class="t" style="left:594.40px;top:780.00px;font-size:32px;line-height:36px;color:#000;transform:scaleX(1.0027);">33310</span>
<div style="position:absolute;left:55.5px;top:818.75px;width:69.6px;height:43.6px;background:#4472C4;"></div>
<div style="position:absolute;left:126.1px;top:818.75px;width:449.3px;height:43.6px;background:#D9E2F3;"></div>
<div style="position:absolute;left:576.6px;top:818.75px;width:140.9px;height:43.6px;background:#D9E2F3;"></div>
<span class="t" style="left:72.19px;top:824.50px;font-size:32px;line-height:36px;color:#fff;transform:scaleX(1.0363);font-weight:700;">16.</span>
<span class="t" style="left:143.66px;top:825.50px;font-size:31px;line-height:35px;color:#000;transform:scaleX(1.0108);">Полтавська область</span>
<span class="t" style="left:594.40px;top:824.50px;font-size:32px;line-height:36px;color:#000;transform:scaleX(1.0027);">28748</span>
<div style="position:absolute;left:55.5px;top:863.25px;width:69.6px;height:43.6px;background:#4472C4;"></div>
<div style="position:absolute;left:126.1px;top:863.25px;width:449.3px;height:43.6px;background:#B4C7E7;"></div>
<div style="position:absolute;left:576.6px;top:863.25px;width:140.9px;height:43.6px;background:#B4C7E7;"></div>
<span class="t" style="left:72.19px;top:869.00px;font-size:32px;line-height:36px;color:#fff;transform:scaleX(1.0363);font-weight:700;">17.</span>
<span class="t" style="left:143.62px;top:870.00px;font-size:31px;line-height:35px;color:#000;transform:scaleX(1.0154);">Рівненська область</span>
<span class="t" style="left:594.40px;top:869.00px;font-size:32px;line-height:36px;color:#000;transform:scaleX(1.0027);">20047</span>
<div style="position:absolute;left:749.5px;top:64px;width:662px;height:86px;background:#4472C4;"></div>
<div style="position:absolute;left:818.1px;top:64px;width:1.2px;height:86px;background:repeating-linear-gradient(to bottom,#eef1f8 0 1.4px,#8d93a0 1.4px 4px);"></div>
<div style="position:absolute;left:1269.0px;top:64px;width:1.2px;height:86px;background:repeating-linear-gradient(to bottom,#eef1f8 0 1.4px,#8d93a0 1.4px 4px);"></div>
<span class="t" style="left:766.08px;top:90.60px;font-size:32px;line-height:36px;color:#fff;transform:scaleX(1.0500);font-weight:700;">№</span>
<span class="t" style="left:997.45px;top:90.60px;font-size:32px;line-height:36px;color:#fff;transform:scaleX(0.9726);font-weight:700;">Регіон</span>
<span class="t" style="left:1289.78px;top:70.30px;font-size:32px;line-height:36px;color:#fff;transform:scaleX(0.9550);font-weight:700;">Площа</span>
<span class="t" style="left:1303.86px;top:112.60px;font-size:32px;line-height:36px;color:#fff;transform:scaleX(1.0480);font-weight:700;">(км<span style="font-size:66%;position:relative;top:-0.40em">2</span>)</span>
<div style="position:absolute;left:749.5px;top:151.25px;width:69.6px;height:43.6px;background:#4472C4;"></div>
<div style="position:absolute;left:820.1px;top:151.25px;width:449.3px;height:43.6px;background:#B4C7E7;"></div>
<div style="position:absolute;left:1270.6px;top:151.25px;width:140.9px;height:43.6px;background:#B4C7E7;"></div>
<span class="t" style="left:766.57px;top:157.00px;font-size:32px;line-height:36px;color:#fff;transform:scaleX(1.0431);font-weight:700;">1.</span>
<span class="t" style="left:837.98px;top:158.00px;font-size:31px;line-height:35px;color:#000;transform:scaleX(1.0092);">Одеська область</span>
<span class="t" style="left:1288.40px;top:157.00px;font-size:32px;line-height:36px;color:#000;transform:scaleX(1.0027);">33310</span>
<div style="position:absolute;left:749.5px;top:195.75px;width:69.6px;height:43.6px;background:#4472C4;"></div>
<div style="position:absolute;left:820.1px;top:195.75px;width:449.3px;height:43.6px;background:#D9E2F3;"></div>
<div style="position:absolute;left:1270.6px;top:195.75px;width:140.9px;height:43.6px;background:#D9E2F3;"></div>
<span class="t" style="left:766.57px;top:201.50px;font-size:32px;line-height:36px;color:#fff;transform:scaleX(1.0431);font-weight:700;">2.</span>
<span class="t" style="left:837.97px;top:202.50px;font-size:31px;line-height:35px;color:#000;transform:scaleX(1.0406);">Дніпропетровська область</span>
<span class="t" style="left:1288.40px;top:201.50px;font-size:32px;line-height:36px;color:#000;transform:scaleX(1.0027);">31914</span>
<div style="position:absolute;left:749.5px;top:240.25px;width:69.6px;height:43.6px;background:#4472C4;"></div>
<div style="position:absolute;left:820.1px;top:240.25px;width:449.3px;height:43.6px;background:#B4C7E7;"></div>
<div style="position:absolute;left:1270.6px;top:240.25px;width:140.9px;height:43.6px;background:#B4C7E7;"></div>
<span class="t" style="left:766.57px;top:246.00px;font-size:32px;line-height:36px;color:#fff;transform:scaleX(1.0431);font-weight:700;">3.</span>
<span class="t" style="left:836.71px;top:247.00px;font-size:31px;line-height:35px;color:#000;transform:scaleX(1.0294);">Чернігівська область</span>
<span class="t" style="left:1288.40px;top:246.00px;font-size:32px;line-height:36px;color:#000;transform:scaleX(1.0027);">31865</span>
<div style="position:absolute;left:749.5px;top:284.75px;width:69.6px;height:43.6px;background:#4472C4;"></div>
<div style="position:absolute;left:820.1px;top:284.75px;width:449.3px;height:43.6px;background:#D9E2F3;"></div>
<div style="position:absolute;left:1270.6px;top:284.75px;width:140.9px;height:43.6px;background:#D9E2F3;"></div>
<span class="t" style="left:766.57px;top:290.50px;font-size:32px;line-height:36px;color:#fff;transform:scaleX(1.0431);font-weight:700;">4.</span>
<span class="t" style="left:838.01px;top:291.50px;font-size:31px;line-height:35px;color:#000;transform:scaleX(1.0152);">Харківська область</span>
<span class="t" style="left:1288.40px;top:290.50px;font-size:32px;line-height:36px;color:#000;transform:scaleX(1.0027);">31415</span>
<div style="position:absolute;left:749.5px;top:329.25px;width:69.6px;height:43.6px;background:#4472C4;"></div>
<div style="position:absolute;left:820.1px;top:329.25px;width:449.3px;height:43.6px;background:#B4C7E7;"></div>
<div style="position:absolute;left:1270.6px;top:329.25px;width:140.9px;height:43.6px;background:#B4C7E7;"></div>
<span class="t" style="left:766.57px;top:335.00px;font-size:32px;line-height:36px;color:#fff;transform:scaleX(1.0431);font-weight:700;">5.</span>
<span class="t" style="left:838.29px;top:336.00px;font-size:31px;line-height:35px;color:#000;transform:scaleX(1.0263);">Житомирська область</span>
<span class="t" style="left:1288.40px;top:335.00px;font-size:32px;line-height:36px;color:#000;transform:scaleX(1.0027);">29832</span>
<div style="position:absolute;left:749.5px;top:373.75px;width:69.6px;height:43.6px;background:#4472C4;"></div>
<div style="position:absolute;left:820.1px;top:373.75px;width:449.3px;height:43.6px;background:#D9E2F3;"></div>
<div style="position:absolute;left:1270.6px;top:373.75px;width:140.9px;height:43.6px;background:#D9E2F3;"></div>
<span class="t" style="left:766.57px;top:379.50px;font-size:32px;line-height:36px;color:#fff;transform:scaleX(1.0431);font-weight:700;">6.</span>
<span class="t" style="left:837.66px;top:380.50px;font-size:31px;line-height:35px;color:#000;transform:scaleX(1.0108);">Полтавська область</span>
<span class="t" style="left:1288.40px;top:379.50px;font-size:32px;line-height:36px;color:#000;transform:scaleX(1.0027);">28748</span>
<div style="position:absolute;left:749.5px;top:418.25px;width:69.6px;height:43.6px;background:#4472C4;"></div>
<div style="position:absolute;left:820.1px;top:418.25px;width:449.3px;height:43.6px;background:#B4C7E7;"></div>
<div style="position:absolute;left:1270.6px;top:418.25px;width:140.9px;height:43.6px;background:#B4C7E7;"></div>
<span class="t" style="left:766.57px;top:424.00px;font-size:32px;line-height:36px;color:#fff;transform:scaleX(1.0431);font-weight:700;">7.</span>
<span class="t" style="left:838.51px;top:425.00px;font-size:31px;line-height:35px;color:#000;transform:scaleX(1.0054);">Херсонська область</span>
<span class="t" style="left:1288.40px;top:424.00px;font-size:32px;line-height:36px;color:#000;transform:scaleX(1.0027);">28461</span>
<div style="position:absolute;left:749.5px;top:462.75px;width:69.6px;height:43.6px;background:#4472C4;"></div>
<div style="position:absolute;left:820.1px;top:462.75px;width:449.3px;height:43.6px;background:#D9E2F3;"></div>
<div style="position:absolute;left:1270.6px;top:462.75px;width:140.9px;height:43.6px;background:#D9E2F3;"></div>
<span class="t" style="left:766.57px;top:468.50px;font-size:32px;line-height:36px;color:#fff;transform:scaleX(1.0431);font-weight:700;">8.</span>
<span class="t" style="left:837.61px;top:469.50px;font-size:31px;line-height:35px;color:#000;transform:scaleX(1.0193);">Київська область</span>
<span class="t" style="left:1288.40px;top:468.50px;font-size:32px;line-height:36px;color:#000;transform:scaleX(1.0027);">28131</span>
<div style="position:absolute;left:749.5px;top:507.25px;width:69.6px;height:43.6px;background:#4472C4;"></div>
<div style="position:absolute;left:820.1px;top:507.25px;width:449.3px;height:43.6px;background:#B4C7E7;"></div>
<div style="position:absolute;left:1270.6px;top:507.25px;width:140.9px;height:43.6px;background:#B4C7E7;"></div>
<span class="t" style="left:766.57px;top:513.00px;font-size:32px;line-height:36px;color:#fff;transform:scaleX(1.0431);font-weight:700;">9.</span>
<span class="t" style="left:837.69px;top:514.00px;font-size:31px;line-height:35px;color:#000;transform:scaleX(1.0222);">Запорізька область</span>
<span class="t" style="left:1288.40px;top:513.00px;font-size:32px;line-height:36px;color:#000;transform:scaleX(1.0027);">27180</span>
<div style="position:absolute;left:749.5px;top:551.75px;width:69.6px;height:43.6px;background:#4472C4;"></div>
<div style="position:absolute;left:820.1px;top:551.75px;width:449.3px;height:43.6px;background:#D9E2F3;"></div>
<div style="position:absolute;left:1270.6px;top:551.75px;width:140.9px;height:43.6px;background:#D9E2F3;"></div>
<span class="t" style="left:766.19px;top:557.50px;font-size:32px;line-height:36px;color:#fff;transform:scaleX(1.0363);font-weight:700;">10.</span>
<span class="t" style="left:837.95px;top:558.50px;font-size:31px;line-height:35px;color:#000;transform:scaleX(1.0218);">Луганська область</span>
<span class="t" style="left:1288.40px;top:557.50px;font-size:32px;line-height:36px;color:#000;transform:scaleX(1.0027);">26684</span>
<div style="position:absolute;left:749.5px;top:596.25px;width:69.6px;height:43.6px;background:#4472C4;"></div>
<div style="position:absolute;left:820.1px;top:596.25px;width:449.3px;height:43.6px;background:#B4C7E7;"></div>
<div style="position:absolute;left:1270.6px;top:596.25px;width:140.9px;height:43.6px;background:#B4C7E7;"></div>
<span class="t" style="left:766.19px;top:602.00px;font-size:32px;line-height:36px;color:#fff;transform:scaleX(1.0363);font-weight:700;">11.</span>
<span class="t" style="left:837.98px;top:603.00px;font-size:31px;line-height:35px;color:#000;transform:scaleX(1.0288);">Донецька область</span>
<span class="t" style="left:1288.40px;top:602.00px;font-size:32px;line-height:36px;color:#000;transform:scaleX(1.0027);">26517</span>
<div style="position:absolute;left:749.5px;top:640.75px;width:69.6px;height:43.6px;background:#4472C4;"></div>
<div style="position:absolute;left:820.1px;top:640.75px;width:449.3px;height:43.6px;background:#D9E2F3;"></div>
<div style="position:absolute;left:1270.6px;top:640.75px;width:140.9px;height:43.6px;background:#D9E2F3;"></div>
<span class="t" style="left:766.19px;top:646.50px;font-size:32px;line-height:36px;color:#fff;transform:scaleX(1.0363);font-weight:700;">12.</span>
<span class="t" style="left:836.82px;top:647.50px;font-size:31px;line-height:35px;color:#000;transform:scaleX(1.0347);">Вінницька область</span>
<span class="t" style="left:1288.40px;top:646.50px;font-size:32px;line-height:36px;color:#000;transform:scaleX(1.0027);">26513</span>
<div style="position:absolute;left:749.5px;top:685.25px;width:69.6px;height:43.6px;background:#4472C4;"></div>
<div style="position:absolute;left:820.1px;top:685.25px;width:449.3px;height:43.6px;background:#B4C7E7;"></div>
<div style="position:absolute;left:1270.6px;top:685.25px;width:140.9px;height:43.6px;background:#B4C7E7;"></div>
<span class="t" style="left:766.19px;top:691.00px;font-size:32px;line-height:36px;color:#fff;transform:scaleX(1.0363);font-weight:700;">13.</span>
<span class="t" style="left:837.42px;top:692.00px;font-size:31px;line-height:35px;color:#000;transform:scaleX(1.0938);">Крим</span>
<span class="t" style="left:1288.40px;top:691.00px;font-size:32px;line-height:36px;color:#000;transform:scaleX(1.0027);">26200</span>
<div style="position:absolute;left:749.5px;top:729.75px;width:69.6px;height:43.6px;background:#4472C4;"></div>
<div style="position:absolute;left:820.1px;top:729.75px;width:449.3px;height:43.6px;background:#D9E2F3;"></div>
<div style="position:absolute;left:1270.6px;top:729.75px;width:140.9px;height:43.6px;background:#D9E2F3;"></div>
<span class="t" style="left:766.19px;top:735.50px;font-size:32px;line-height:36px;color:#fff;transform:scaleX(1.0363);font-weight:700;">14.</span>
<span class="t" style="left:836.81px;top:736.50px;font-size:31px;line-height:35px;color:#000;transform:scaleX(1.0375);">Миколаївська область</span>
<span class="t" style="left:1288.40px;top:735.50px;font-size:32px;line-height:36px;color:#000;transform:scaleX(1.0027);">24598</span>
<div style="position:absolute;left:749.5px;top:774.25px;width:69.6px;height:43.6px;background:#4472C4;"></div>
<div style="position:absolute;left:820.1px;top:774.25px;width:449.3px;height:43.6px;background:#B4C7E7;"></div>
<div style="position:absolute;left:1270.6px;top:774.25px;width:140.9px;height:43.6px;background:#B4C7E7;"></div>
<span class="t" style="left:766.19px;top:780.00px;font-size:32px;line-height:36px;color:#fff;transform:scaleX(1.0363);font-weight:700;">15.</span>
<span class="t" style="left:837.57px;top:781.00px;font-size:31px;line-height:35px;color:#000;transform:scaleX(1.0335);">Кіровоградська область</span>
<span class="t" style="left:1288.40px;top:780.00px;font-size:32px;line-height:36px;color:#000;transform:scaleX(1.0027);">24588</span>
<div style="position:absolute;left:749.5px;top:818.75px;width:69.6px;height:43.6px;background:#4472C4;"></div>
<div style="position:absolute;left:820.1px;top:818.75px;width:449.3px;height:43.6px;background:#D9E2F3;"></div>
<div style="position:absolute;left:1270.6px;top:818.75px;width:140.9px;height:43.6px;background:#D9E2F3;"></div>
<span class="t" style="left:766.19px;top:824.50px;font-size:32px;line-height:36px;color:#fff;transform:scaleX(1.0363);font-weight:700;">16.</span>
<span class="t" style="left:837.62px;top:825.50px;font-size:31px;line-height:35px;color:#000;transform:scaleX(1.0162);">Сумська область</span>
<span class="t" style="left:1288.40px;top:824.50px;font-size:32px;line-height:36px;color:#000;transform:scaleX(1.0027);">23834</span>
<div style="position:absolute;left:749.5px;top:863.25px;width:69.6px;height:43.6px;background:#4472C4;"></div>
<div style="position:absolute;left:820.1px;top:863.25px;width:449.3px;height:43.6px;background:#B4C7E7;"></div>
<div style="position:absolute;left:1270.6px;top:863.25px;width:140.9px;height:43.6px;background:#B4C7E7;"></div>
<span class="t" style="left:766.19px;top:869.00px;font-size:32px;line-height:36px;color:#fff;transform:scaleX(1.0363);font-weight:700;">17.</span>
<span class="t" style="left:837.95px;top:870.00px;font-size:31px;line-height:35px;color:#000;transform:scaleX(1.0211);">Львівська область</span>
<span class="t" style="left:1288.40px;top:869.00px;font-size:32px;line-height:36px;color:#000;transform:scaleX(1.0027);">21833</span>
<div style="position:absolute;left:138.5px;top:774.8px;width:555px;height:43.4px;box-shadow:inset 0 0 0 3px #F8494D;"></div>
<div style="position:absolute;left:832.3px;top:152px;width:554px;height:43px;box-shadow:inset 0 0 0 3px #F8494D;"></div>
<svg style="position:absolute;left:0;top:0" width="2510" height="897" viewBox="46.5 403 2510 897" fill="none"><rect x="71.6" y="436.6" width="28.4" height="28.4" fill="#fff" stroke="#8c8c8c" stroke-width="2"/><path d="M76.2 450.8H95.39999999999999M85.8 441.2V460.40000000000003" stroke="#45474d" stroke-width="2.1"/><path d="M82.3 444.2L85.8 440.6L89.3 444.2M82.3 457.40000000000003L85.8 461.0L89.3 457.40000000000003M79.2 447.3L75.6 450.8L79.2 454.3M92.39999999999999 447.3L96.0 450.8L92.39999999999999 454.3" stroke="#45474d" stroke-width="2.3" fill="none"/><rect x="766.1" y="436.6" width="28.4" height="28.4" fill="#fff" stroke="#8c8c8c" stroke-width="2"/><path d="M770.6999999999999 450.8H789.9M780.3 441.2V460.40000000000003" stroke="#45474d" stroke-width="2.1"/><path d="M776.8 444.2L780.3 440.6L783.8 444.2M776.8 457.40000000000003L780.3 461.0L783.8 457.40000000000003M773.6999999999999 447.3L770.0999999999999 450.8L773.6999999999999 454.3M786.9 447.3L790.5 450.8L786.9 454.3" stroke="#45474d" stroke-width="2.3" fill="none"/></svg>
</div>
<!-- s6_status -->
<div style="position:absolute;left:3px;top:1300px;width:2553.5px;height:40.8px;background:#f4f4f4;border-radius:0 0 8px 8px;"></div>
<div style="position:absolute;left:3px;top:1300px;width:2553.5px;height:1.5px;background:#d0d0d0;"></div>
<div style="position:absolute;left:2046px;top:1301.5px;width:79px;height:38.5px;background:#dcdcdc;"></div>
<span class="t" style="left:13.27px;top:1311.60px;font-size:20.9px;line-height:23px;color:#2b2b2b;transform:scaleX(0.9896);">Сторінка 1 із 1</span>
<span class="t" style="left:188.32px;top:1311.60px;font-size:20.9px;line-height:23px;color:#2b2b2b;transform:scaleX(0.9776);">Кількість слів: 103</span>
<span class="t" style="left:460.46px;top:1311.60px;font-size:20.9px;line-height:23px;color:#2b2b2b;transform:scaleX(0.9813);">українська</span>
<span class="t" style="left:597.34px;top:1311.60px;font-size:20.9px;line-height:23px;color:#2b2b2b;transform:scaleX(0.9914);">Завбачливий ввід тексту: увімкнуто</span>
<span class="t" style="left:1008.96px;top:1311.60px;font-size:20.9px;line-height:23px;color:#2b2b2b;transform:scaleX(0.9958);">Спеціальні можливості: усе добре</span>
<span class="t" style="left:1484.29px;top:1311.60px;font-size:20.9px;line-height:23px;color:#2b2b2b;transform:scaleX(1.0080);">Параметри відображення</span>
<span class="t" style="left:1800.50px;top:1311.60px;font-size:20.9px;line-height:23px;color:#2b2b2b;transform:scaleX(0.9594);">Сфокусуватися</span>
<span class="t" style="left:2494.51px;top:1311.60px;font-size:20.9px;line-height:23px;color:#2b2b2b;transform:scaleX(0.9389);">160%</span>
<svg style="position:absolute;left:0;top:0" width="2560" height="1344" viewBox="0 0 2560 1344" fill="none"><path d="M410.8 1316.5V1333.5M410.8 1316.5C407 1313 402 1312.5 398.5 1312.8V1333.2H408M410.8 1316.5C414.5 1313 419.5 1312.5 423 1312.8V1325" stroke="#2e2e2e" stroke-width="2" fill="none"/><path d="M411.5 1329.5L416 1334.2L423.5 1326.5" stroke="#2e2e2e" stroke-width="2" fill="none"/><circle cx="987.3" cy="1313.6" r="3.1" stroke="#2e2e2e" stroke-width="2" fill="none"/><path d="M976.5 1314.8C978.5 1319.5 983 1320.8 987.3 1320.8C991.6 1320.8 996.5 1319.5 998.8 1314.5" stroke="#2e2e2e" stroke-width="2" fill="none"/><path d="M985.6 1321V1326.5C985.6 1331 979.5 1330.5 980.3 1334.2C980.8 1336.2 983.6 1336 984 1334" stroke="#2e2e2e" stroke-width="2" fill="none"/><path d="M989.5 1320.8V1324.5" stroke="#2e2e2e" stroke-width="2" fill="none"/><path d="M990 1330.8L994.3 1335.2L1003.8 1325.6" stroke="#2e2e2e" stroke-width="2" fill="none"/><path d="M1462 1328.8H1452.3V1313H1477V1318" stroke="#2e2e2e" stroke-width="2" fill="none"/><path d="M1470 1318.6L1472 1319L1472.8 1321.2L1475.2 1320.6L1476.6 1322.2L1475.4 1324.2L1477 1326L1479 1326.2L1479 1328.6L1477 1329L1476.4 1331L1477.6 1332.8L1476 1334.4L1474 1333.6L1472.2 1334.8L1472 1336.8L1469.6 1336.8L1469 1334.8L1467 1334L1465.2 1335L1463.6 1333.4L1464.6 1331.4L1463.6 1329.4L1461.6 1329L1461.6 1326.6L1463.6 1326L1464.4 1324L1463.4 1322.2L1465 1320.6L1467 1321.4L1468.8 1320.4Z" fill="#2e2e2e" stroke="#2e2e2e" stroke-width="1" stroke-linejoin="round"/><circle cx="1470.3" cy="1327.7" r="2.6" fill="#f4f4f4"/><path d="M1767.5 1316V1310H1773.5M1788.5 1310H1794.5V1316M1794.5 1329.5V1335.5H1788.5M1773.5 1335.5H1767.5V1329.5" stroke="#2e2e2e" stroke-width="2" fill="none"/><path d="M1775.5 1314.5H1783L1787.5 1319V1331H1775.5Z" stroke="#2e2e2e" stroke-width="2" fill="none"/><path d="M1782.5 1314.5V1319.5H1787.5" stroke="#2e2e2e" stroke-width="1.6" fill="none"/><path d="M2005 1314.5V1333.5M2005 1314.5C2001.5 1312 1997 1311.8 1993.5 1312.5V1331.5C1997 1330.8 2001.5 1331 2005 1333.5C2008.5 1331 2013 1330.8 2016.5 1331.5V1312.5C2013 1311.8 2008.5 1312 2005 1314.5Z" stroke="#2e2e2e" stroke-width="2" fill="none"/><path d="M1996.5 1317.5H2002M1996.5 1321.5H2002M1996.5 1325.5H2002M2008 1317.5H2013.5M2008 1321.5H2013.5M2008 1325.5H2013.5" stroke="#2e2e2e" stroke-width="1.7"/><rect x="2075" y="1310.8" width="20" height="24.5" stroke="#2e2e2e" stroke-width="2" fill="none"/><path d="M2079 1316H2091M2079 1320H2091M2079 1324H2091M2079 1328H2091M2079 1332H2091" stroke="#2e2e2e" stroke-width="1.7"/><path d="M2163 1334.5H2153.5V1311H2176.5V1321" stroke="#2e2e2e" stroke-width="2" fill="none"/><path d="M2157 1315.5H2173M2157 1319.5H2173M2157 1323.5H2165M2157 1327.5H2163" stroke="#2e2e2e" stroke-width="1.7"/><circle cx="2172" cy="1329" r="7" stroke="#2e2e2e" stroke-width="2" fill="none"/><path d="M2165 1329H2179M2172 1322C2168.5 1325 2168.5 1333 2172 1336C2175.5 1333 2175.5 1325 2172 1322Z" stroke="#2e2e2e" stroke-width="1.4" fill="none"/><path d="M2217.5 1322.5H2232.5M2454 1322.5H2469M2461.5 1315V1330" stroke="#2b2b2b" stroke-width="1.6"/><path d="M2245 1322.5H2442.5" stroke="#6b6b6b" stroke-width="1.3"/><path d="M2344 1317V1328" stroke="#6b6b6b" stroke-width="1.3"/><rect x="2355" y="1311.5" width="9.2" height="22" fill="#666"/></svg>
<!-- s7_dialog -->
<div style="position:absolute;left:1524px;top:570px;width:961px;height:660px;box-sizing:border-box;background:#f0f0f0;border:1.2px solid #a9a9a9;border-radius:13px;box-shadow:0 24px 58px rgba(0,0,0,0.33),0 2px 12px rgba(0,0,0,0.14);overflow:hidden;"><div style="position:absolute;left:0px;top:0px;width:961px;height:49px;background:#eef1f8;"></div></div>
<span class="t" style="left:1535.77px;top:583.80px;font-size:21.8px;line-height:25px;color:#1b1b1b;transform:scaleX(0.9430);">Сортування</span>
<span class="t" style="left:2359.25px;top:582.80px;font-size:23px;line-height:26px;color:#1b1b1b;transform:scaleX(0.7988);">?</span>
<span class="t" style="left:1535.92px;top:636.80px;font-size:18.8px;line-height:21px;color:#1b1b1b;transform:scaleX(0.9380);">Сорту<u>в</u>ати за</span>
<div style="position:absolute;left:1649.5px;top:646.0px;width:823.0px;height:1.2px;background:#dcdcdc;"></div>
<div style="position:absolute;left:1553.8px;top:673.2px;width:283px;height:39.4px;box-sizing:border-box;background:#fff;border:1.3px solid #b9b9b9;"></div><div style="position:absolute;left:1805.5px;top:675.3000000000001px;width:29.2px;height:35.199999999999996px;box-sizing:border-box;background:#fdfdfd;border:1.2px solid #d9d9d9;border-radius:3px;"></div>
<span class="t" style="left:1853.90px;top:684.20px;font-size:18.8px;line-height:21px;color:#1b1b1b;transform:scaleX(0.9640);"><u>Т</u>ип:</span>
<span class="t" style="left:1853.97px;top:731.60px;font-size:18.8px;line-height:21px;color:#1b1b1b;transform:scaleX(0.8818);">За:</span>
<div style="position:absolute;left:1906.3px;top:671.5px;width:394.5px;height:43px;box-sizing:border-box;background:#fff;border:1.3px solid #b9b9b9;"></div><div style="position:absolute;left:2269.5px;top:673.6px;width:29.2px;height:38.8px;box-sizing:border-box;background:#fdfdfd;border:1.2px solid #d9d9d9;border-radius:3px;"></div>
<div style="position:absolute;left:1906.3px;top:721.6px;width:394.5px;height:39.1px;box-sizing:border-box;background:#fff;border:1.3px solid #b9b9b9;"></div><div style="position:absolute;left:2269.5px;top:723.7px;width:29.2px;height:34.9px;box-sizing:border-box;background:#fdfdfd;border:1.2px solid #d9d9d9;border-radius:3px;"></div>
<span class="t" style="left:1912.20px;top:684.20px;font-size:18.8px;line-height:21px;color:#1b1b1b;transform:scaleX(0.9569);">Число</span>
<span class="t" style="left:1910.24px;top:731.10px;font-size:18.8px;line-height:21px;color:#1b1b1b;transform:scaleX(0.9569);">абзацами</span>
<span class="t" style="left:2348.39px;top:678.80px;font-size:18.8px;line-height:21px;color:#1b1b1b;transform:scaleX(0.9555);">з<u>а</u> зростанням</span>
<span class="t" style="left:2348.39px;top:718.50px;font-size:18.8px;line-height:21px;color:#1b1b1b;transform:scaleX(0.9498);"><u>з</u>а спаданням</span>
<span class="t" style="left:1535.32px;top:781.30px;font-size:18.8px;line-height:21px;color:#1b1b1b;transform:scaleX(0.9714);">Пот<u>і</u>м за</span>
<div style="position:absolute;left:1611.8px;top:790.5px;width:860.7px;height:1.2px;background:#dcdcdc;"></div>
<div style="position:absolute;left:1553.8px;top:817.7px;width:283px;height:39.4px;box-sizing:border-box;background:#fff;border:1.3px solid #b9b9b9;"></div><div style="position:absolute;left:1805.5px;top:819.8000000000001px;width:29.2px;height:35.199999999999996px;box-sizing:border-box;background:#fdfdfd;border:1.2px solid #d9d9d9;border-radius:3px;"></div>
<span class="t" style="left:1853.90px;top:828.70px;font-size:18.8px;line-height:21px;color:#1b1b1b;transform:scaleX(0.9640);">Т<u>и</u>п:</span>
<span class="t" style="left:1853.97px;top:876.10px;font-size:18.8px;line-height:21px;color:#1b1b1b;transform:scaleX(0.8818);">За:</span>
<div style="position:absolute;left:1906.3px;top:816.0px;width:394.5px;height:43px;box-sizing:border-box;background:#fff;border:1.3px solid #b9b9b9;"></div><div style="position:absolute;left:2269.5px;top:818.1px;width:29.2px;height:38.8px;box-sizing:border-box;background:#fdfdfd;border:1.2px solid #d9d9d9;border-radius:3px;"></div>
<div style="position:absolute;left:1906.3px;top:866.1px;width:394.5px;height:39.1px;box-sizing:border-box;background:#fff;border:1.3px solid #b9b9b9;"></div><div style="position:absolute;left:2269.5px;top:868.2px;width:29.2px;height:34.9px;box-sizing:border-box;background:#fdfdfd;border:1.2px solid #d9d9d9;border-radius:3px;"></div>
<span class="t" style="left:1913.31px;top:828.70px;font-size:18.8px;line-height:21px;color:#1b1b1b;transform:scaleX(0.9091);">тексту</span>
<span class="t" style="left:1910.24px;top:875.60px;font-size:18.8px;line-height:21px;color:#1b1b1b;transform:scaleX(0.9569);">абзацами</span>
<span class="t" style="left:2348.39px;top:823.30px;font-size:18.8px;line-height:21px;color:#1b1b1b;transform:scaleX(0.9555);">за зро<u>с</u>танням</span>
<span class="t" style="left:2348.39px;top:863.00px;font-size:18.8px;line-height:21px;color:#1b1b1b;transform:scaleX(0.9498);">за спада<u>н</u>ням</span>
<span class="t" style="left:1535.32px;top:925.80px;font-size:18.8px;line-height:21px;color:#1b1b1b;transform:scaleX(0.9714);">П<u>о</u>тім за</span>
<div style="position:absolute;left:1611.8px;top:935.0px;width:860.7px;height:1.2px;background:#dcdcdc;"></div>
<div style="position:absolute;left:1553.8px;top:962.2px;width:283px;height:39.4px;box-sizing:border-box;background:#f4f4f4;border:1.3px solid #b9b9b9;"></div><div style="position:absolute;left:1805.5px;top:964.3000000000001px;width:29.2px;height:35.199999999999996px;box-sizing:border-box;background:#fdfdfd;border:1.2px solid #d9d9d9;border-radius:3px;"></div>
<span class="t" style="left:1853.90px;top:973.20px;font-size:18.8px;line-height:21px;color:#737373;transform:scaleX(0.9640);">Тип:</span>
<span class="t" style="left:1853.97px;top:1020.60px;font-size:18.8px;line-height:21px;color:#737373;transform:scaleX(0.8818);">За:</span>
<div style="position:absolute;left:1906.3px;top:960.5px;width:394.5px;height:43px;box-sizing:border-box;background:#f4f4f4;border:1.3px solid #b9b9b9;"></div><div style="position:absolute;left:2269.5px;top:962.6px;width:29.2px;height:38.8px;box-sizing:border-box;background:#fdfdfd;border:1.2px solid #d9d9d9;border-radius:3px;"></div>
<div style="position:absolute;left:1906.3px;top:1010.6px;width:394.5px;height:39.1px;box-sizing:border-box;background:#f4f4f4;border:1.3px solid #b9b9b9;"></div><div style="position:absolute;left:2269.5px;top:1012.7px;width:29.2px;height:34.9px;box-sizing:border-box;background:#fdfdfd;border:1.2px solid #d9d9d9;border-radius:3px;"></div>
<span class="t" style="left:1913.31px;top:973.20px;font-size:18.8px;line-height:21px;color:#737373;transform:scaleX(0.9091);">тексту</span>
<span class="t" style="left:1910.24px;top:1020.10px;font-size:18.8px;line-height:21px;color:#737373;transform:scaleX(0.9569);">абзацами</span>
<span class="t" style="left:2348.39px;top:967.80px;font-size:18.8px;line-height:21px;color:#737373;transform:scaleX(0.9555);">за зростанням</span>
<span class="t" style="left:2348.39px;top:1007.50px;font-size:18.8px;line-height:21px;color:#737373;transform:scaleX(0.9498);">за спаданням</span>
<div style="position:absolute;left:1558px;top:679.3px;width:101.3px;height:25.3px;background:#99C9EF;"></div>
<span class="t" style="left:1557.54px;top:683.00px;font-size:18.8px;line-height:21px;color:#1b1b1b;transform:scaleX(0.9611);">Площа (км<span style="font-size:66%;position:relative;top:-0.42em">2</span>)</span>
<span class="t" style="left:1535.90px;top:1070.50px;font-size:18.8px;line-height:21px;color:#1b1b1b;transform:scaleX(0.9559);">Список</span>
<div style="position:absolute;left:1600.8px;top:1079px;width:871.7px;height:1.2px;background:#dcdcdc;"></div>
<span class="t" style="left:1582.89px;top:1113.00px;font-size:18.8px;line-height:21px;color:#1b1b1b;transform:scaleX(0.9575);">з рядком за<u>г</u>оловка</span>
<span class="t" style="left:1795.76px;top:1113.00px;font-size:18.8px;line-height:21px;color:#1b1b1b;transform:scaleX(0.9494);"><u>б</u>ез рядка заголовка</span>
<div style="position:absolute;left:1536.2px;top:1171.2px;width:140.8px;height:44.6px;box-sizing:border-box;background:#fbfbfb;border:1.2px solid #d2d2d2;border-bottom-color:#bdbdbd;border-radius:5px;"></div>
<div style="position:absolute;left:2172.4px;top:1171.2px;width:140.8px;height:44.6px;box-sizing:border-box;background:#fbfbfb;border:1.6px solid #2E7BD0;border-radius:5px;"></div>
<div style="position:absolute;left:2331.4px;top:1171.2px;width:140.8px;height:44.6px;box-sizing:border-box;background:#fbfbfb;border:1.2px solid #d2d2d2;border-bottom-color:#bdbdbd;border-radius:5px;"></div>
<span class="t" style="left:1553.97px;top:1184.30px;font-size:18.8px;line-height:21px;color:#1b1b1b;transform:scaleX(0.9376);">Парам<u>е</u>три...</span>
<span class="t" style="left:2230.66px;top:1184.30px;font-size:18.8px;line-height:21px;color:#1b1b1b;transform:scaleX(0.9557);">ОК</span>
<span class="t" style="left:2359.12px;top:1184.30px;font-size:18.8px;line-height:21px;color:#1b1b1b;transform:scaleX(0.9357);">Скасувати</span>
<svg style="position:absolute;left:0;top:0" width="2560" height="1344" viewBox="0 0 2560 1344" fill="none"><path d="M2434.6 587.1L2451.4 603.9M2451.4 587.1L2434.6 603.9" stroke="#1b1b1b" stroke-width="1.5"/><path d="M1815.0 690.6L1820.6 696.1999999999999L1826.1999999999998 690.6" stroke="#5a5a5a" stroke-width="1.5" fill="none"/><path d="M2279.4 691.4000000000001L2285 697.0L2290.6 691.4000000000001" stroke="#5a5a5a" stroke-width="1.5" fill="none"/><path d="M2279.4 739.2L2285 744.8L2290.6 739.2" stroke="#5a5a5a" stroke-width="1.5" fill="none"/><circle cx="2329.8" cy="688.6" r="10.5" fill="#f7f7f7" stroke="#868686" stroke-width="1.3"/><circle cx="2329.8" cy="728.3" r="11.1" fill="#0A63BC"/><circle cx="2329.8" cy="728.3" r="4.8" fill="#fff"/><path d="M1815.0 835.1L1820.6 840.6999999999999L1826.1999999999998 835.1" stroke="#5a5a5a" stroke-width="1.5" fill="none"/><path d="M2279.4 835.9000000000001L2285 841.5L2290.6 835.9000000000001" stroke="#5a5a5a" stroke-width="1.5" fill="none"/><path d="M2279.4 883.7L2285 889.3L2290.6 883.7" stroke="#5a5a5a" stroke-width="1.5" fill="none"/><circle cx="2329.8" cy="833.1" r="11.1" fill="#0A63BC"/><circle cx="2329.8" cy="833.1" r="4.8" fill="#fff"/><circle cx="2329.8" cy="872.8" r="10.5" fill="#f7f7f7" stroke="#868686" stroke-width="1.3"/><path d="M1815.0 979.6L1820.6 985.1999999999999L1826.1999999999998 979.6" stroke="#5a5a5a" stroke-width="1.5" fill="none"/><path d="M2279.4 980.4000000000001L2285 986.0L2290.6 980.4000000000001" stroke="#5a5a5a" stroke-width="1.5" fill="none"/><path d="M2279.4 1028.2L2285 1033.8L2290.6 1028.2" stroke="#5a5a5a" stroke-width="1.5" fill="none"/><circle cx="2329.8" cy="977.6" r="11.1" fill="#c4c4c4"/><circle cx="2329.8" cy="977.6" r="4.8" fill="#f3f3f3"/><circle cx="2329.8" cy="1017.3" r="10.5" fill="#f6f6f6" stroke="#c6c6c6" stroke-width="1.3"/><circle cx="1565" cy="1121.8" r="11.1" fill="#0A63BC"/><circle cx="1565" cy="1121.8" r="4.8" fill="#fff"/><circle cx="1777.5" cy="1121.8" r="10.5" fill="#f7f7f7" stroke="#868686" stroke-width="1.3"/></svg>
<div style="position:absolute;left:3px;top:96px;width:2553.5px;height:1244.8px;box-sizing:border-box;border:1.2px solid #f6f6f0;border-radius:0 0 8px 8px;pointer-events:none;"></div>
</div>
</body></html>
